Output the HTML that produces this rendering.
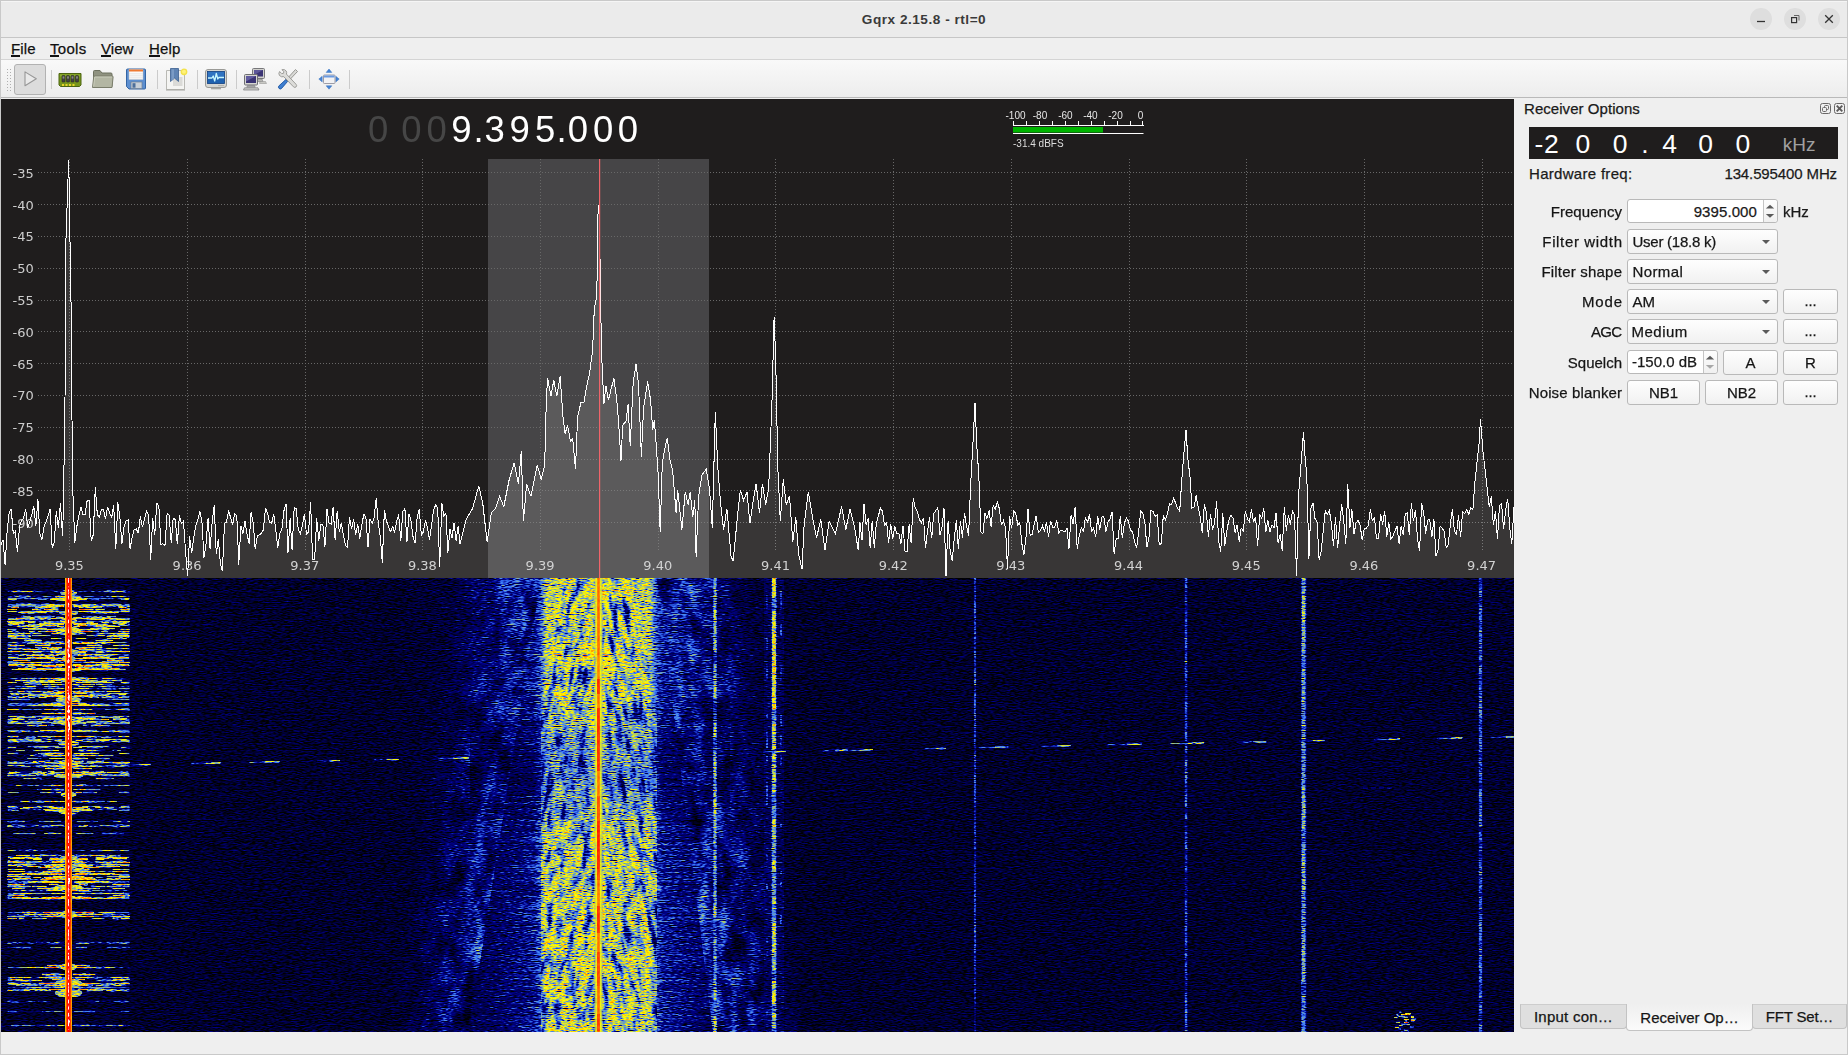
<!DOCTYPE html>
<html lang="en"><head><meta charset="utf-8"><title>Gqrx 2.15.8 - rtl=0</title>
<style>
*{box-sizing:border-box;margin:0;padding:0}
html,body{width:1848px;height:1055px;overflow:hidden;background:#efefef}
body{-webkit-text-stroke:.25px currentColor;font-family:"Liberation Sans","DejaVu Sans",sans-serif;font-size:14.6px;color:#1a1a1a;position:relative}
.abs{position:absolute}
#win{position:absolute;left:0;top:0;width:1848px;height:1055px;background:#efefef;overflow:hidden}
#titlebar{left:0;top:0;width:1848px;height:38px;background:#ebebeb;border-top:1px solid #c9c9c9;border-bottom:1px solid #c6c6c6;box-shadow:inset 0 1px 0 #f5f5f5}
#title{left:0;top:1px;width:1848px;text-align:center;font-weight:bold;font-size:13.600px;color:#3a3a3a;line-height:38px;letter-spacing:.52px;-webkit-text-stroke:0}
.wbtn{width:22px;height:22px;border-radius:11px;background:#dedede;top:8px}
#menubar{left:0;top:38px;width:1848px;height:22px;background:#efefef;border-bottom:1px solid #d4d4d4}
.menu{top:38px;height:21px;line-height:21px;font-size:15px;color:#111}
.menu i{position:absolute;left:0;top:17.300px;height:1.500px;background:#111}
#toolbar{left:0;top:60px;width:1848px;height:38px;background:linear-gradient(#f9f9f9,#f3f3f3 50%,#ededed);border-bottom:1px solid #b9b9b9}
.tsep{top:70px;width:1px;height:19px;background:#cbcbcb}
#playbtn{left:14px;top:64px;width:32px;height:31px;border:1px solid #b2b2b2;border-radius:3px;background:#dcdcdc}
.ico{top:67px;width:24px;height:24px}
#dock{left:1514px;top:99px;width:333px;height:933px;background:#efefef}
.lbl{height:24px;line-height:24px;text-align:right;white-space:nowrap;color:#151515}
.ctl{border:1px solid #b9b9b9;border-radius:3px;background:linear-gradient(#fefefe,#f1f1f1);height:25px;line-height:23px;white-space:nowrap;color:#151515}
.btn{text-align:center}
.spin{background:#fff}
.arrow{width:0;height:0;border-left:4px solid transparent;border-right:4px solid transparent;border-top:4.5px solid #5a5a5a}
.tab{top:1004px;height:25px;border:1px solid #c3c3c3;border-top:1px solid #cdcdcd;border-radius:0 0 4px 4px;background:#dfdfdf;text-align:center;line-height:24px;white-space:nowrap;color:#151515}
.tab.sel{border-top:none;height:27px;background:linear-gradient(#efefef,#fbfbfb);line-height:27px}
#edgeL{left:0;top:0;width:1px;height:1055px;background:#c9c9c9}
#edgeR{left:1847px;top:0;width:1px;height:1055px;background:#c9c9c9}
#edgeB{left:0;top:1054px;width:1848px;height:1px;background:#c9c9c9}
</style></head>
<body><div id="win">
<svg class="abs" style="left:1px;top:99px;will-change:transform" width="1513" height="479" viewBox="1 99 1513 479">
<rect x="1" y="99" width="1513" height="479" fill="#1f1d1d"/>
<rect x="488" y="159" width="221" height="419" fill="#464547"/>
<path d="M38 172.5H1514M38 204.5H1514M38 236.5H1514M38 268.5H1514M38 300.5H1514M38 331.5H1514M38 363.5H1514M38 395.5H1514M38 427.5H1514M38 459.5H1514M38 490.5H1514M38 522.5H1514M69.5 159V551M187.5 159V551M305.5 159V551M422.5 159V551M540.5 159V551M658.5 159V551M775.5 159V551M893.5 159V551M1011.5 159V551M1129.5 159V551M1246.5 159V551M1364.5 159V551M1482.5 159V551" stroke="#686868" stroke-width="1" stroke-dasharray="1 2" fill="none" shape-rendering="crispEdges"/>
<g font-family="DejaVu Sans, Liberation Sans, sans-serif" font-size="13px" fill="#cdcdcd">
<text x="33.700" y="177.7" text-anchor="end">-35</text>
<text x="33.700" y="209.5" text-anchor="end">-40</text>
<text x="33.700" y="241.3" text-anchor="end">-45</text>
<text x="33.700" y="273.1" text-anchor="end">-50</text>
<text x="33.700" y="304.9" text-anchor="end">-55</text>
<text x="33.700" y="336.7" text-anchor="end">-60</text>
<text x="33.700" y="368.5" text-anchor="end">-65</text>
<text x="33.700" y="400.3" text-anchor="end">-70</text>
<text x="33.700" y="432.1" text-anchor="end">-75</text>
<text x="33.700" y="463.9" text-anchor="end">-80</text>
<text x="33.700" y="495.7" text-anchor="end">-85</text>
<text x="33.700" y="527.5" text-anchor="end">-90</text>
<text x="69.4" y="569.700" text-anchor="middle">9.35</text>
<text x="187.1" y="569.700" text-anchor="middle">9.36</text>
<text x="304.8" y="569.700" text-anchor="middle">9.37</text>
<text x="422.4" y="569.700" text-anchor="middle">9.38</text>
<text x="540.1" y="569.700" text-anchor="middle">9.39</text>
<text x="657.8" y="569.700" text-anchor="middle">9.40</text>
<text x="775.5" y="569.700" text-anchor="middle">9.41</text>
<text x="893.2" y="569.700" text-anchor="middle">9.42</text>
<text x="1010.8" y="569.700" text-anchor="middle">9.43</text>
<text x="1128.5" y="569.700" text-anchor="middle">9.44</text>
<text x="1246.2" y="569.700" text-anchor="middle">9.45</text>
<text x="1363.9" y="569.700" text-anchor="middle">9.46</text>
<text x="1481.6" y="569.700" text-anchor="middle">9.47</text>
</g>
<polygon points="1,580 1.0,544.8 3.0,540.0 5.1,565.0 7.1,531.3 9.2,512.7 11.2,508.7 13.3,533.9 15.4,531.3 17.4,552.4 19.5,526.8 21.5,520.2 23.6,518.5 25.6,508.7 27.7,527.6 29.7,522.0 31.8,514.5 33.8,506.3 35.9,525.8 37.9,499.4 39.9,534.0 42.0,539.6 44.0,526.8 46.1,521.7 48.1,515.7 50.2,508.9 52.2,547.9 54.3,541.9 56.3,510.9 58.4,528.4 60.4,502.6 62.5,536.1 63.3,512.0 65.0,400.0 65.8,244.0 68.0,179.0 68.8,160.4 69.6,225.0 70.8,273.0 71.7,396.0 73.0,496.0 74.8,543.0 76.8,526.7 78.9,515.7 80.9,506.8 83.0,514.9 85.0,514.6 87.1,500.9 89.1,500.4 91.2,541.0 93.2,535.0 95.3,487.5 97.3,514.4 99.4,517.2 101.4,509.1 103.5,510.0 105.5,518.6 107.6,506.7 109.6,513.0 111.7,517.4 113.7,505.3 115.8,549.0 117.8,502.4 119.9,517.8 121.9,543.5 124.0,526.8 126.0,521.0 128.1,519.9 130.1,548.8 132.2,536.7 134.2,529.3 136.3,529.0 138.3,533.3 140.4,516.4 142.4,527.1 144.5,518.7 146.5,511.2 148.6,514.6 150.7,559.5 152.7,518.1 154.8,534.9 156.8,502.7 158.9,507.0 160.9,544.2 163.0,543.9 165.0,545.3 167.1,513.3 169.1,515.3 171.2,542.5 173.2,518.1 175.3,519.5 177.3,544.3 179.4,515.5 181.4,523.5 183.5,521.2 185.5,550.8 187.6,576.2 189.6,536.5 191.7,553.4 193.7,537.4 195.8,526.1 197.8,519.4 199.9,511.4 201.9,521.2 204.0,557.6 206.0,544.0 208.1,517.6 210.1,549.0 212.2,521.9 214.2,505.3 216.3,554.3 218.3,539.2 220.4,563.5 222.4,571.0 224.5,523.4 226.5,522.3 228.6,510.3 230.6,517.7 232.7,524.8 234.7,513.6 236.8,515.8 238.8,564.5 240.9,525.9 242.9,533.5 245.0,521.2 247.0,533.8 249.1,543.6 251.1,512.1 253.2,522.6 255.2,549.2 257.3,535.8 259.3,534.8 261.4,533.4 263.4,529.8 265.5,508.2 267.5,512.8 269.6,522.3 271.6,523.4 273.7,513.9 275.7,529.7 277.8,547.9 279.8,533.7 281.9,528.8 283.9,510.9 286.0,503.6 288.0,552.6 290.1,518.1 292.1,549.9 294.2,507.4 296.2,508.8 298.3,529.6 300.3,533.4 302.4,525.3 304.4,514.3 306.5,534.1 308.5,532.1 310.6,502.4 312.6,559.7 314.7,558.9 316.7,518.3 318.8,540.5 320.8,524.3 322.9,524.5 324.9,546.9 327.0,508.8 329.0,522.9 331.1,524.0 333.1,507.0 335.2,540.4 337.2,510.6 339.3,531.9 341.3,522.8 343.4,535.2 345.4,545.3 347.5,547.3 349.5,517.0 351.6,528.8 353.6,518.9 355.7,535.0 357.7,524.1 359.8,538.5 361.8,524.9 363.9,513.8 365.9,517.7 368.0,547.2 370.0,519.5 372.1,523.3 374.1,518.0 376.2,498.4 378.2,521.7 380.3,537.3 382.3,562.5 384.4,509.7 386.4,521.1 388.5,526.2 390.5,532.0 392.6,526.1 394.6,532.4 396.7,521.5 398.7,514.6 400.8,541.1 402.8,511.5 404.9,508.5 406.9,542.3 409.0,514.0 411.0,520.5 413.1,537.2 415.1,542.9 417.2,517.0 419.2,509.0 421.3,535.0 423.3,532.2 425.4,520.4 427.4,526.9 429.5,539.9 431.5,525.7 433.6,509.9 435.6,505.0 437.7,507.8 439.7,566.5 441.8,502.9 443.8,516.7 445.9,513.1 447.9,552.5 450.0,529.3 452.0,537.9 454.1,522.6 456.1,540.5 458.2,525.6 460.0,544.2 466.3,519.1 472.5,508.7 478.8,485.8 482.9,504.5 487.1,542.1 491.3,512.9 495.5,508.7 499.6,496.2 503.8,506.6 509.2,479.5 514.2,462.8 518.4,483.7 521.3,451.1 523.4,521.2 526.7,483.7 530.9,496.2 537.2,464.9 541.3,479.5 544.7,464.9 546.3,400.3 547.6,378.2 550.9,396.1 553.8,380.2 556.8,396.1 560.1,376.1 563.0,416.9 565.1,433.6 567.6,425.3 570.5,442.0 572.6,437.8 575.5,469.1 577.6,416.9 581.0,402.3 583.9,402.3 587.2,383.6 589.3,375.2 592.6,350.2 594.3,308.5 596.8,296.0 598.1,208.4 599.3,204.2 600.6,304.3 601.8,358.6 603.9,404.4 606.0,385.7 608.5,400.3 611.4,387.7 613.9,378.6 616.8,400.3 618.5,421.1 621.0,460.7 622.7,425.3 626.0,421.1 628.1,404.4 630.2,446.1 633.1,383.6 636.0,364.0 638.5,383.6 641.4,456.6 643.5,408.6 647.7,381.5 650.6,400.3 652.7,429.5 654.4,420.3 656.0,442.0 658.1,473.3 660.2,531.6 662.3,462.8 664.4,450.3 667.3,437.8 669.8,458.7 672.7,471.2 676.1,512.9 677.7,489.9 681.9,529.6 685.2,492.0 688.2,504.5 690.2,492.0 692.7,517.0 694.8,500.4 696.1,556.7 698.6,496.2 701.9,475.3 706.1,469.1 709.4,487.9 712.3,527.5 715.3,411.9 717.8,467.0 720.7,504.5 723.6,529.6 726.9,508.7 731.1,556.7 733.2,560.8 737.4,517.0 740.3,489.9 743.6,500.4 747.0,492.0 749.9,523.3 753.2,500.4 756.1,483.7 759.5,512.9 762.4,483.7 765.7,504.5 768.7,487.9 772.0,400.3 774.1,316.8 775.7,358.6 777.8,467.0 780.3,521.2 783.3,479.5 786.2,504.5 789.5,496.2 792.8,542.1 795.8,517.0 798.7,554.6 802.0,569.2 804.1,525.4 808.3,492.0 812.5,517.0 816.6,537.9 820.8,519.1 825.0,550.4 829.1,521.2 835.4,533.7 841.6,506.6 845.8,529.6 850.0,508.7 854.2,525.4 858.3,550.4 859.9,522.1 862.0,540.1 864.0,504.3 866.1,525.0 868.1,518.4 870.2,548.3 872.2,520.9 874.3,547.6 876.3,523.2 878.4,516.0 880.4,507.9 882.5,511.4 884.5,526.0 886.6,521.7 888.6,543.0 890.7,524.1 892.7,538.6 894.8,526.4 896.8,533.8 898.9,533.6 900.9,543.5 903.0,525.6 905.0,551.1 907.1,551.5 909.1,524.5 911.2,543.3 913.2,497.7 915.3,508.2 917.3,511.1 919.4,519.6 921.4,522.9 923.5,517.7 925.5,548.1 927.6,530.2 929.6,517.4 931.7,538.4 933.7,513.7 935.8,510.7 937.8,507.4 939.9,534.8 941.9,528.2 944.0,508.5 946.0,576.0 948.1,520.7 950.1,550.5 952.2,561.0 954.2,539.1 956.3,520.2 958.3,548.6 960.4,520.6 962.4,537.6 964.5,512.9 966.5,526.1 968.6,535.6 970.6,485.5 972.7,448.2 975.0,403.0 976.8,445.5 978.8,475.3 980.9,532.0 982.9,534.2 985.0,512.7 987.0,518.5 989.1,510.4 991.1,526.5 993.2,505.2 995.2,509.6 997.3,501.5 999.3,508.5 1001.4,525.2 1003.4,520.9 1005.5,527.9 1007.5,569.1 1009.6,516.5 1011.6,528.2 1013.7,511.1 1015.7,513.0 1017.8,524.9 1019.8,522.6 1021.9,544.0 1023.9,554.6 1026.0,537.0 1028.0,509.2 1030.1,535.2 1032.1,534.8 1034.2,524.1 1036.2,515.6 1038.3,532.1 1040.3,530.9 1042.4,525.7 1044.4,531.5 1046.5,521.6 1048.5,537.2 1050.6,520.7 1052.6,527.2 1054.7,527.5 1056.7,520.3 1058.8,533.1 1060.8,530.0 1062.9,530.8 1064.9,531.6 1067.0,528.3 1069.0,548.7 1071.1,515.0 1073.1,524.1 1075.2,506.8 1077.2,548.9 1079.3,535.5 1081.3,527.6 1083.4,532.2 1085.4,517.1 1087.5,522.6 1089.5,514.3 1091.6,531.7 1093.6,528.2 1095.7,537.3 1097.7,516.5 1099.8,529.5 1101.8,517.1 1103.9,516.7 1105.9,531.7 1108.0,522.4 1110.0,518.7 1112.1,512.1 1114.1,553.5 1116.2,538.8 1118.2,538.3 1120.3,515.8 1122.3,538.0 1124.4,523.2 1126.4,517.8 1128.5,521.5 1130.5,530.3 1132.6,531.9 1134.6,541.9 1136.7,548.0 1138.7,530.6 1140.8,511.1 1142.8,513.5 1144.9,522.9 1146.9,547.3 1149.0,536.9 1151.0,510.0 1153.1,511.7 1155.1,516.2 1157.2,515.0 1159.2,544.7 1161.3,543.6 1163.3,515.5 1165.4,520.0 1167.4,513.6 1169.5,503.7 1171.5,504.8 1173.6,498.1 1175.6,502.9 1177.7,508.6 1179.7,511.2 1181.8,479.6 1183.8,454.2 1186.0,430.0 1187.9,458.8 1190.0,477.0 1192.0,508.2 1194.1,506.9 1196.1,495.4 1198.2,507.5 1200.2,516.4 1202.3,532.9 1204.3,504.6 1206.4,512.1 1208.4,536.8 1210.5,513.7 1212.5,529.5 1214.6,522.7 1216.6,501.4 1218.7,541.4 1220.7,551.6 1222.8,513.4 1224.8,545.9 1226.9,530.4 1228.9,519.9 1231.0,515.0 1233.0,518.3 1235.1,532.9 1237.1,525.0 1239.2,542.0 1241.2,527.8 1243.3,531.5 1245.3,511.1 1247.4,518.6 1249.4,522.0 1251.5,509.5 1253.5,521.6 1255.6,517.1 1257.6,546.3 1259.7,514.4 1261.7,518.8 1263.8,508.4 1265.8,532.4 1267.9,520.4 1269.9,532.3 1272.0,524.8 1274.0,527.6 1276.1,512.8 1278.1,542.9 1280.2,534.4 1282.2,550.8 1284.3,507.0 1286.3,530.8 1288.4,515.2 1290.4,524.6 1292.5,510.4 1294.5,515.3 1296.6,575.5 1298.6,493.9 1300.7,468.6 1303.5,432.0 1304.8,453.5 1306.8,475.1 1308.9,558.5 1310.9,508.5 1313.0,502.7 1315.0,518.5 1317.1,522.3 1319.1,559.7 1321.2,551.2 1323.2,531.4 1325.3,510.7 1327.3,513.9 1329.4,510.5 1331.4,523.5 1333.5,546.1 1335.5,517.1 1337.6,548.1 1339.6,525.3 1341.7,504.5 1343.7,520.6 1345.8,544.2 1347.8,484.4 1349.9,527.9 1351.9,509.5 1354.0,533.9 1356.0,523.2 1358.1,520.5 1360.1,524.9 1362.2,540.0 1364.2,529.0 1366.3,528.1 1368.3,525.3 1370.4,508.9 1372.4,521.3 1374.5,517.6 1376.5,538.7 1378.6,538.3 1380.6,514.2 1382.7,524.5 1384.7,510.8 1386.8,536.6 1388.8,521.8 1390.9,538.9 1392.9,536.4 1395.0,530.7 1397.0,526.3 1399.1,543.6 1401.1,526.1 1403.2,534.9 1405.2,514.3 1407.3,512.7 1409.3,534.9 1411.4,502.9 1413.4,521.3 1415.5,509.7 1417.5,538.7 1419.6,551.1 1421.6,502.7 1423.7,512.9 1425.7,533.5 1427.8,520.0 1429.8,519.8 1431.9,537.1 1433.9,519.1 1436.0,556.2 1438.0,550.3 1440.1,526.2 1442.1,528.4 1444.2,531.3 1446.2,547.7 1448.3,544.4 1450.3,524.7 1452.4,509.3 1454.4,530.9 1456.5,534.5 1458.5,515.3 1460.6,536.9 1462.6,511.7 1464.7,513.7 1466.7,509.7 1468.8,514.2 1470.8,508.0 1472.9,509.2 1474.9,482.5 1477.0,462.3 1479.0,444.3 1480.5,419.0 1483.1,452.8 1485.2,470.5 1487.2,489.1 1489.3,507.2 1491.3,496.2 1493.4,525.4 1495.4,511.2 1497.5,539.2 1499.5,505.2 1501.6,503.9 1503.6,529.1 1505.7,509.4 1507.7,498.6 1509.8,528.5 1511.8,544.2 1513.9,506.8 1514,580" fill="#fff" fill-opacity=".115"/>
<polyline points="1.0,544.8 3.0,540.0 5.1,565.0 7.1,531.3 9.2,512.7 11.2,508.7 13.3,533.9 15.4,531.3 17.4,552.4 19.5,526.8 21.5,520.2 23.6,518.5 25.6,508.7 27.7,527.6 29.7,522.0 31.8,514.5 33.8,506.3 35.9,525.8 37.9,499.4 39.9,534.0 42.0,539.6 44.0,526.8 46.1,521.7 48.1,515.7 50.2,508.9 52.2,547.9 54.3,541.9 56.3,510.9 58.4,528.4 60.4,502.6 62.5,536.1 63.3,512.0 65.0,400.0 65.8,244.0 68.0,179.0 68.8,160.4 69.6,225.0 70.8,273.0 71.7,396.0 73.0,496.0 74.8,543.0 76.8,526.7 78.9,515.7 80.9,506.8 83.0,514.9 85.0,514.6 87.1,500.9 89.1,500.4 91.2,541.0 93.2,535.0 95.3,487.5 97.3,514.4 99.4,517.2 101.4,509.1 103.5,510.0 105.5,518.6 107.6,506.7 109.6,513.0 111.7,517.4 113.7,505.3 115.8,549.0 117.8,502.4 119.9,517.8 121.9,543.5 124.0,526.8 126.0,521.0 128.1,519.9 130.1,548.8 132.2,536.7 134.2,529.3 136.3,529.0 138.3,533.3 140.4,516.4 142.4,527.1 144.5,518.7 146.5,511.2 148.6,514.6 150.7,559.5 152.7,518.1 154.8,534.9 156.8,502.7 158.9,507.0 160.9,544.2 163.0,543.9 165.0,545.3 167.1,513.3 169.1,515.3 171.2,542.5 173.2,518.1 175.3,519.5 177.3,544.3 179.4,515.5 181.4,523.5 183.5,521.2 185.5,550.8 187.6,576.2 189.6,536.5 191.7,553.4 193.7,537.4 195.8,526.1 197.8,519.4 199.9,511.4 201.9,521.2 204.0,557.6 206.0,544.0 208.1,517.6 210.1,549.0 212.2,521.9 214.2,505.3 216.3,554.3 218.3,539.2 220.4,563.5 222.4,571.0 224.5,523.4 226.5,522.3 228.6,510.3 230.6,517.7 232.7,524.8 234.7,513.6 236.8,515.8 238.8,564.5 240.9,525.9 242.9,533.5 245.0,521.2 247.0,533.8 249.1,543.6 251.1,512.1 253.2,522.6 255.2,549.2 257.3,535.8 259.3,534.8 261.4,533.4 263.4,529.8 265.5,508.2 267.5,512.8 269.6,522.3 271.6,523.4 273.7,513.9 275.7,529.7 277.8,547.9 279.8,533.7 281.9,528.8 283.9,510.9 286.0,503.6 288.0,552.6 290.1,518.1 292.1,549.9 294.2,507.4 296.2,508.8 298.3,529.6 300.3,533.4 302.4,525.3 304.4,514.3 306.5,534.1 308.5,532.1 310.6,502.4 312.6,559.7 314.7,558.9 316.7,518.3 318.8,540.5 320.8,524.3 322.9,524.5 324.9,546.9 327.0,508.8 329.0,522.9 331.1,524.0 333.1,507.0 335.2,540.4 337.2,510.6 339.3,531.9 341.3,522.8 343.4,535.2 345.4,545.3 347.5,547.3 349.5,517.0 351.6,528.8 353.6,518.9 355.7,535.0 357.7,524.1 359.8,538.5 361.8,524.9 363.9,513.8 365.9,517.7 368.0,547.2 370.0,519.5 372.1,523.3 374.1,518.0 376.2,498.4 378.2,521.7 380.3,537.3 382.3,562.5 384.4,509.7 386.4,521.1 388.5,526.2 390.5,532.0 392.6,526.1 394.6,532.4 396.7,521.5 398.7,514.6 400.8,541.1 402.8,511.5 404.9,508.5 406.9,542.3 409.0,514.0 411.0,520.5 413.1,537.2 415.1,542.9 417.2,517.0 419.2,509.0 421.3,535.0 423.3,532.2 425.4,520.4 427.4,526.9 429.5,539.9 431.5,525.7 433.6,509.9 435.6,505.0 437.7,507.8 439.7,566.5 441.8,502.9 443.8,516.7 445.9,513.1 447.9,552.5 450.0,529.3 452.0,537.9 454.1,522.6 456.1,540.5 458.2,525.6 460.0,544.2 466.3,519.1 472.5,508.7 478.8,485.8 482.9,504.5 487.1,542.1 491.3,512.9 495.5,508.7 499.6,496.2 503.8,506.6 509.2,479.5 514.2,462.8 518.4,483.7 521.3,451.1 523.4,521.2 526.7,483.7 530.9,496.2 537.2,464.9 541.3,479.5 544.7,464.9 546.3,400.3 547.6,378.2 550.9,396.1 553.8,380.2 556.8,396.1 560.1,376.1 563.0,416.9 565.1,433.6 567.6,425.3 570.5,442.0 572.6,437.8 575.5,469.1 577.6,416.9 581.0,402.3 583.9,402.3 587.2,383.6 589.3,375.2 592.6,350.2 594.3,308.5 596.8,296.0 598.1,208.4 599.3,204.2 600.6,304.3 601.8,358.6 603.9,404.4 606.0,385.7 608.5,400.3 611.4,387.7 613.9,378.6 616.8,400.3 618.5,421.1 621.0,460.7 622.7,425.3 626.0,421.1 628.1,404.4 630.2,446.1 633.1,383.6 636.0,364.0 638.5,383.6 641.4,456.6 643.5,408.6 647.7,381.5 650.6,400.3 652.7,429.5 654.4,420.3 656.0,442.0 658.1,473.3 660.2,531.6 662.3,462.8 664.4,450.3 667.3,437.8 669.8,458.7 672.7,471.2 676.1,512.9 677.7,489.9 681.9,529.6 685.2,492.0 688.2,504.5 690.2,492.0 692.7,517.0 694.8,500.4 696.1,556.7 698.6,496.2 701.9,475.3 706.1,469.1 709.4,487.9 712.3,527.5 715.3,411.9 717.8,467.0 720.7,504.5 723.6,529.6 726.9,508.7 731.1,556.7 733.2,560.8 737.4,517.0 740.3,489.9 743.6,500.4 747.0,492.0 749.9,523.3 753.2,500.4 756.1,483.7 759.5,512.9 762.4,483.7 765.7,504.5 768.7,487.9 772.0,400.3 774.1,316.8 775.7,358.6 777.8,467.0 780.3,521.2 783.3,479.5 786.2,504.5 789.5,496.2 792.8,542.1 795.8,517.0 798.7,554.6 802.0,569.2 804.1,525.4 808.3,492.0 812.5,517.0 816.6,537.9 820.8,519.1 825.0,550.4 829.1,521.2 835.4,533.7 841.6,506.6 845.8,529.6 850.0,508.7 854.2,525.4 858.3,550.4 859.9,522.1 862.0,540.1 864.0,504.3 866.1,525.0 868.1,518.4 870.2,548.3 872.2,520.9 874.3,547.6 876.3,523.2 878.4,516.0 880.4,507.9 882.5,511.4 884.5,526.0 886.6,521.7 888.6,543.0 890.7,524.1 892.7,538.6 894.8,526.4 896.8,533.8 898.9,533.6 900.9,543.5 903.0,525.6 905.0,551.1 907.1,551.5 909.1,524.5 911.2,543.3 913.2,497.7 915.3,508.2 917.3,511.1 919.4,519.6 921.4,522.9 923.5,517.7 925.5,548.1 927.6,530.2 929.6,517.4 931.7,538.4 933.7,513.7 935.8,510.7 937.8,507.4 939.9,534.8 941.9,528.2 944.0,508.5 946.0,576.0 948.1,520.7 950.1,550.5 952.2,561.0 954.2,539.1 956.3,520.2 958.3,548.6 960.4,520.6 962.4,537.6 964.5,512.9 966.5,526.1 968.6,535.6 970.6,485.5 972.7,448.2 975.0,403.0 976.8,445.5 978.8,475.3 980.9,532.0 982.9,534.2 985.0,512.7 987.0,518.5 989.1,510.4 991.1,526.5 993.2,505.2 995.2,509.6 997.3,501.5 999.3,508.5 1001.4,525.2 1003.4,520.9 1005.5,527.9 1007.5,569.1 1009.6,516.5 1011.6,528.2 1013.7,511.1 1015.7,513.0 1017.8,524.9 1019.8,522.6 1021.9,544.0 1023.9,554.6 1026.0,537.0 1028.0,509.2 1030.1,535.2 1032.1,534.8 1034.2,524.1 1036.2,515.6 1038.3,532.1 1040.3,530.9 1042.4,525.7 1044.4,531.5 1046.5,521.6 1048.5,537.2 1050.6,520.7 1052.6,527.2 1054.7,527.5 1056.7,520.3 1058.8,533.1 1060.8,530.0 1062.9,530.8 1064.9,531.6 1067.0,528.3 1069.0,548.7 1071.1,515.0 1073.1,524.1 1075.2,506.8 1077.2,548.9 1079.3,535.5 1081.3,527.6 1083.4,532.2 1085.4,517.1 1087.5,522.6 1089.5,514.3 1091.6,531.7 1093.6,528.2 1095.7,537.3 1097.7,516.5 1099.8,529.5 1101.8,517.1 1103.9,516.7 1105.9,531.7 1108.0,522.4 1110.0,518.7 1112.1,512.1 1114.1,553.5 1116.2,538.8 1118.2,538.3 1120.3,515.8 1122.3,538.0 1124.4,523.2 1126.4,517.8 1128.5,521.5 1130.5,530.3 1132.6,531.9 1134.6,541.9 1136.7,548.0 1138.7,530.6 1140.8,511.1 1142.8,513.5 1144.9,522.9 1146.9,547.3 1149.0,536.9 1151.0,510.0 1153.1,511.7 1155.1,516.2 1157.2,515.0 1159.2,544.7 1161.3,543.6 1163.3,515.5 1165.4,520.0 1167.4,513.6 1169.5,503.7 1171.5,504.8 1173.6,498.1 1175.6,502.9 1177.7,508.6 1179.7,511.2 1181.8,479.6 1183.8,454.2 1186.0,430.0 1187.9,458.8 1190.0,477.0 1192.0,508.2 1194.1,506.9 1196.1,495.4 1198.2,507.5 1200.2,516.4 1202.3,532.9 1204.3,504.6 1206.4,512.1 1208.4,536.8 1210.5,513.7 1212.5,529.5 1214.6,522.7 1216.6,501.4 1218.7,541.4 1220.7,551.6 1222.8,513.4 1224.8,545.9 1226.9,530.4 1228.9,519.9 1231.0,515.0 1233.0,518.3 1235.1,532.9 1237.1,525.0 1239.2,542.0 1241.2,527.8 1243.3,531.5 1245.3,511.1 1247.4,518.6 1249.4,522.0 1251.5,509.5 1253.5,521.6 1255.6,517.1 1257.6,546.3 1259.7,514.4 1261.7,518.8 1263.8,508.4 1265.8,532.4 1267.9,520.4 1269.9,532.3 1272.0,524.8 1274.0,527.6 1276.1,512.8 1278.1,542.9 1280.2,534.4 1282.2,550.8 1284.3,507.0 1286.3,530.8 1288.4,515.2 1290.4,524.6 1292.5,510.4 1294.5,515.3 1296.6,575.5 1298.6,493.9 1300.7,468.6 1303.5,432.0 1304.8,453.5 1306.8,475.1 1308.9,558.5 1310.9,508.5 1313.0,502.7 1315.0,518.5 1317.1,522.3 1319.1,559.7 1321.2,551.2 1323.2,531.4 1325.3,510.7 1327.3,513.9 1329.4,510.5 1331.4,523.5 1333.5,546.1 1335.5,517.1 1337.6,548.1 1339.6,525.3 1341.7,504.5 1343.7,520.6 1345.8,544.2 1347.8,484.4 1349.9,527.9 1351.9,509.5 1354.0,533.9 1356.0,523.2 1358.1,520.5 1360.1,524.9 1362.2,540.0 1364.2,529.0 1366.3,528.1 1368.3,525.3 1370.4,508.9 1372.4,521.3 1374.5,517.6 1376.5,538.7 1378.6,538.3 1380.6,514.2 1382.7,524.5 1384.7,510.8 1386.8,536.6 1388.8,521.8 1390.9,538.9 1392.9,536.4 1395.0,530.7 1397.0,526.3 1399.1,543.6 1401.1,526.1 1403.2,534.9 1405.2,514.3 1407.3,512.7 1409.3,534.9 1411.4,502.9 1413.4,521.3 1415.5,509.7 1417.5,538.7 1419.6,551.1 1421.6,502.7 1423.7,512.9 1425.7,533.5 1427.8,520.0 1429.8,519.8 1431.9,537.1 1433.9,519.1 1436.0,556.2 1438.0,550.3 1440.1,526.2 1442.1,528.4 1444.2,531.3 1446.2,547.7 1448.3,544.4 1450.3,524.7 1452.4,509.3 1454.4,530.9 1456.5,534.5 1458.5,515.3 1460.6,536.9 1462.6,511.7 1464.7,513.7 1466.7,509.7 1468.8,514.2 1470.8,508.0 1472.9,509.2 1474.9,482.5 1477.0,462.3 1479.0,444.3 1480.5,419.0 1483.1,452.8 1485.2,470.5 1487.2,489.1 1489.3,507.2 1491.3,496.2 1493.4,525.4 1495.4,511.2 1497.5,539.2 1499.5,505.2 1501.6,503.9 1503.6,529.1 1505.7,509.4 1507.7,498.6 1509.8,528.5 1511.8,544.2 1513.9,506.8" fill="none" stroke="#fff" stroke-width="1" stroke-linejoin="miter" stroke-miterlimit="3" shape-rendering="crispEdges"/>
<rect x="599" y="159" width="1.200" height="419" fill="#f0646a"/>
<g font-family="Liberation Sans, sans-serif" font-size="36.500px">
<text y="142.100"><tspan x="368.0 401.3 426.5" fill="#464646">000</tspan><tspan x="451.2 473.4 484.6 509.6 534.9 556.5 567.7 592.9 617.7" fill="#fff">9.395.000</tspan></text>
</g>
<g font-family="Liberation Sans, sans-serif" font-size="10px" fill="#e6e6e6">
<text x="1015.5" y="119" text-anchor="middle">-100</text>
<text x="1040" y="119" text-anchor="middle">-80</text>
<text x="1065.4" y="119" text-anchor="middle">-60</text>
<text x="1090.4" y="119" text-anchor="middle">-40</text>
<text x="1115.5" y="119" text-anchor="middle">-20</text>
<text x="1143.300" y="119" text-anchor="end">0</text>
<text x="1013" y="147" font-size="10px" fill="#dcdcdc">-31.4 dBFS</text>
</g>
<path d="M1013 125.500H1143.500M1013.5 121V126M1026.5 121V126M1039.5 121V126M1052.5 121V126M1065.5 121V126M1078.5 121V126M1091.5 121V126M1104.5 121V126M1117.5 121V126M1130.5 121V126M1142.5 121V126" stroke="#fff" stroke-width="1" fill="none" shape-rendering="crispEdges"/>
<rect x="1013" y="127" width="90" height="5.500" fill="#00b400"/>
<rect x="1013" y="133" width="130.500" height="1" fill="#fff"/>
</svg>
<svg class="abs" style="left:1px;top:578px" width="1513" height="454" viewBox="1 578 1513 454">
<defs>
<filter id="cm" x="0" y="0" width="100%" height="100%" color-interpolation-filters="sRGB">
<feTurbulence type="fractalNoise" baseFrequency="0.61 0.83" numOctaves="2" seed="5" result="t"/>
<feGaussianBlur in="t" stdDeviation="0.8 0" result="tb"/>
<feColorMatrix in="tb" type="matrix" values="1.7 0 0 0 -0.350 1.7 0 0 0 -0.350 1.7 0 0 0 -0.350 0 0 0 0 1" result="n"/>
<feComponentTransfer in="n" result="nc"><feFuncR type="table" tableValues="0 0.25 0.5 0.69 0.8"/><feFuncG type="table" tableValues="0 0.25 0.5 0.69 0.8"/><feFuncB type="table" tableValues="0 0.25 0.5 0.69 0.8"/></feComponentTransfer>
<feComposite in="SourceGraphic" in2="nc" operator="arithmetic" k1="1.1" k2="0.450" k3="0.42" k4="-0.210" result="lv"/>
<feComponentTransfer in="lv"><feFuncR type="table" tableValues="0 0 0 0 0 0 0 0 0 0 0 0 0 0 0 0.039 0.078 0.118 0.157 0.196 0.235 0.312 0.388 0.465 0.541 0.618 0.694 0.771 0.847 0.924 1 1 1 1 1 1 1 1 1 1 1 1 1 1 1 1 1 1 1 1 1 1"/><feFuncG type="table" tableValues="0 0 0 0 0 0 0 0 0 0 0 0 0 0 0 0.082 0.163 0.245 0.327 0.408 0.49 0.541 0.592 0.643 0.694 0.745 0.796 0.847 0.898 0.949 1 0.95 0.9 0.85 0.8 0.75 0.7 0.65 0.6 0.55 0.5 0.45 0.4 0.35 0.3 0.25 0.2 0.15 0.1 0.05 0 1"/><feFuncB type="table" tableValues="0 0 0 0 0 0.055 0.11 0.165 0.22 0.275 0.329 0.384 0.439 0.494 0.549 0.624 0.699 0.775 0.85 0.925 1 0.9 0.8 0.7 0.6 0.5 0.4 0.3 0.2 0.1 0 0 0 0 0 0 0 0 0 0 0 0 0 0 0 0 0 0 0 0 0 1"/></feComponentTransfer>
</filter>
<filter id="cm2" x="0" y="0" width="100%" height="100%" color-interpolation-filters="sRGB">
<feTurbulence type="fractalNoise" baseFrequency="0.45 0.3" numOctaves="1" seed="9" result="t"/>
<feColorMatrix in="t" type="matrix" values="1 0 0 0 0 1 0 0 0 0 1 0 0 0 0 0 0 0 0 1" result="n0"/>
<feComposite in="n0" in2="SourceAlpha" operator="in" result="n"/>
<feComposite in="SourceGraphic" in2="n" operator="arithmetic" k1="0" k2="1" k3="0.14" k4="-0.070" result="lv"/>
<feComponentTransfer in="lv"><feFuncR type="table" tableValues="0 0 0 0 0 0 0 0 0 0 0 0 0 0 0 0.039 0.078 0.118 0.157 0.196 0.235 0.312 0.388 0.465 0.541 0.618 0.694 0.771 0.847 0.924 1 1 1 1 1 1 1 1 1 1 1 1 1 1 1 1 1 1 1 1 1 1"/><feFuncG type="table" tableValues="0 0 0 0 0 0 0 0 0 0 0 0 0 0 0 0.082 0.163 0.245 0.327 0.408 0.49 0.541 0.592 0.643 0.694 0.745 0.796 0.847 0.898 0.949 1 0.95 0.9 0.85 0.8 0.75 0.7 0.65 0.6 0.55 0.5 0.45 0.4 0.35 0.3 0.25 0.2 0.15 0.1 0.05 0 1"/><feFuncB type="table" tableValues="0 0 0 0 0 0.055 0.11 0.165 0.22 0.275 0.329 0.384 0.439 0.494 0.549 0.624 0.699 0.775 0.85 0.925 1 0.9 0.8 0.7 0.6 0.5 0.4 0.3 0.2 0.1 0 0 0 0 0 0 0 0 0 0 0 0 0 0 0 0 0 0 0 0 0 1"/></feComponentTransfer>
</filter>
<filter id="mn" x="0" y="0" width="100%" height="100%" color-interpolation-filters="sRGB">
<feTurbulence type="fractalNoise" baseFrequency="0.15 0.045" numOctaves="2" seed="8" result="t"/>
<feColorMatrix in="t" type="matrix" values="1.9 0 0 0 -0.436 1.9 0 0 0 -0.436 1.9 0 0 0 -0.436 0 0 0 0 1" result="n0"/>
<feComponentTransfer in="n0" result="n"><feFuncR type="table" tableValues="0 0.25 0.5 0.6 0.66"/><feFuncG type="table" tableValues="0 0.25 0.5 0.6 0.66"/><feFuncB type="table" tableValues="0 0.25 0.5 0.6 0.66"/></feComponentTransfer>
<feComposite in="n" in2="SourceGraphic" operator="in"/>
</filter>
<filter id="mn2" x="0" y="0" width="100%" height="100%" color-interpolation-filters="sRGB">
<feTurbulence type="fractalNoise" baseFrequency="0.16 0.04" numOctaves="2" seed="21" result="t"/>
<feColorMatrix in="t" type="matrix" values="1.9 0 0 0 -0.436 1.9 0 0 0 -0.436 1.9 0 0 0 -0.436 0 0 0 0 1" result="n0"/>
<feComponentTransfer in="n0" result="n"><feFuncR type="table" tableValues="0 0.25 0.5 0.6 0.66"/><feFuncG type="table" tableValues="0 0.25 0.5 0.6 0.66"/><feFuncB type="table" tableValues="0 0.25 0.5 0.6 0.66"/></feComponentTransfer>
<feComposite in="n" in2="SourceGraphic" operator="in"/>
</filter>
<filter id="hn" x="0" y="0" width="100%" height="100%" color-interpolation-filters="sRGB">
<feTurbulence type="fractalNoise" baseFrequency="0.012 0.35" numOctaves="2" seed="4" result="t"/>
<feColorMatrix in="t" type="matrix" values="0.9 0 0 0 -0.13 0.9 0 0 0 -0.13 0.9 0 0 0 -0.13 0 0 0 0 1" result="n"/>
<feComposite in="n" in2="SourceGraphic" operator="in"/>
</filter>
<linearGradient id="bg" gradientUnits="userSpaceOnUse" x1="1" y1="0" x2="1514" y2="0"><stop offset="0.00000" stop-color="#242424"/><stop offset="0.26371" stop-color="#242424"/><stop offset="0.29676" stop-color="#282828"/><stop offset="0.32320" stop-color="#323232"/><stop offset="0.34303" stop-color="#3a3a3a"/><stop offset="0.35228" stop-color="#404040"/><stop offset="0.35558" stop-color="#545454"/><stop offset="0.35823" stop-color="#686868"/><stop offset="0.36087" stop-color="#878787"/><stop offset="0.36418" stop-color="#858585"/><stop offset="0.37277" stop-color="#878787"/><stop offset="0.38665" stop-color="#838383"/><stop offset="0.39061" stop-color="#8f8f8f"/><stop offset="0.39326" stop-color="#a1a1a1"/><stop offset="0.39689" stop-color="#a1a1a1"/><stop offset="0.39987" stop-color="#8f8f8f"/><stop offset="0.40582" stop-color="#838383"/><stop offset="0.42234" stop-color="#838383"/><stop offset="0.42631" stop-color="#888888"/><stop offset="0.42895" stop-color="#818181"/><stop offset="0.43159" stop-color="#666666"/><stop offset="0.43424" stop-color="#545454"/><stop offset="0.43754" stop-color="#444444"/><stop offset="0.44878" stop-color="#3c3c3c"/><stop offset="0.46530" stop-color="#323232"/><stop offset="0.48513" stop-color="#2a2a2a"/><stop offset="0.52809" stop-color="#242424"/><stop offset="1.00000" stop-color="#242424"/></linearGradient>
<linearGradient id="ml" gradientUnits="userSpaceOnUse" x1="541" y1="0" x2="657" y2="0"><stop offset="0" stop-color="#fff" stop-opacity="0"/><stop offset=".04" stop-color="#fff" stop-opacity="0.55"/><stop offset=".45" stop-color="#fff" stop-opacity="0.55"/><stop offset=".5" stop-color="#fff" stop-opacity="0.22"/><stop offset=".55" stop-color="#fff" stop-opacity="0.55"/><stop offset=".95" stop-color="#fff" stop-opacity="0.55"/><stop offset="1" stop-color="#fff" stop-opacity="0"/></linearGradient>
<linearGradient id="vdim" gradientUnits="userSpaceOnUse" x1="0" y1="578" x2="0" y2="1032"><stop offset="0.0000" stop-color="#000" stop-opacity="0"/><stop offset="0.2467" stop-color="#000" stop-opacity="0"/><stop offset="0.3458" stop-color="#000" stop-opacity="0.16"/><stop offset="0.4229" stop-color="#000" stop-opacity="0.24"/><stop offset="0.4890" stop-color="#000" stop-opacity="0.16"/><stop offset="0.5551" stop-color="#000" stop-opacity="0.04"/><stop offset="0.7093" stop-color="#000" stop-opacity="0"/><stop offset="1.0000" stop-color="#000" stop-opacity="0"/></linearGradient>
<linearGradient id="hl" gradientUnits="userSpaceOnUse" x1="458" y1="0" x2="541" y2="0"><stop offset="0" stop-color="#fff" stop-opacity="0"/><stop offset=".5" stop-color="#fff" stop-opacity=".3"/><stop offset="1" stop-color="#fff" stop-opacity=".62"/></linearGradient>
<linearGradient id="hr" gradientUnits="userSpaceOnUse" x1="657" y1="0" x2="750" y2="0"><stop offset="0" stop-color="#fff" stop-opacity=".65"/><stop offset=".5" stop-color="#fff" stop-opacity=".4"/><stop offset="1" stop-color="#fff" stop-opacity="0"/></linearGradient>
<clipPath id="bandL"><rect x="541" y="578" width="57.500" height="454"/></clipPath>
<clipPath id="bandR"><rect x="598.500" y="578" width="58.500" height="454"/></clipPath>
<clipPath id="hlclip"><rect x="380" y="578" width="161" height="454"/></clipPath>
<clipPath id="hrclip"><rect x="657" y="578" width="160" height="454"/></clipPath>
<filter id="mn3" x="0" y="0" width="100%" height="100%" color-interpolation-filters="sRGB">
<feTurbulence type="fractalNoise" baseFrequency="0.07 0.03" numOctaves="2" seed="12" result="t"/>
<feColorMatrix in="t" type="matrix" values="0.9 0 0 0 -0.14 0.9 0 0 0 -0.14 0.9 0 0 0 -0.14 0 0 0 0 1" result="n"/>
<feComposite in="n" in2="SourceGraphic" operator="in"/>
</filter>
</defs>
<g filter="url(#cm)">
<rect x="1" y="578" width="1513" height="454" fill="url(#bg)"/>
<g clip-path="url(#hlclip)"><g transform="translate(541 578) skewX(-9) translate(-541 -578)"><rect x="440" y="578" width="101" height="454" fill="url(#hl)" filter="url(#mn3)"/></g></g>
<g clip-path="url(#hrclip)"><g transform="translate(657 578) skewX(7) translate(-657 -578)"><rect x="657" y="578" width="93" height="454" fill="url(#hr)" filter="url(#mn3)"/></g></g>
<rect x="440" y="578" width="101" height="454" fill="url(#hl)" filter="url(#hn)" opacity=".45"/>
<rect x="657" y="578" width="93" height="454" fill="url(#hr)" filter="url(#hn)" opacity=".45"/>
<g clip-path="url(#bandL)"><g transform="translate(598 700) skewX(-9) translate(-598 -700)"><rect x="400" y="578" width="400" height="454" fill="url(#ml)" filter="url(#mn)"/></g></g>
<g clip-path="url(#bandR)"><g transform="translate(598 700) skewX(9) translate(-598 -700)"><rect x="400" y="578" width="400" height="454" fill="url(#ml)" filter="url(#mn2)"/></g></g>
<rect x="470" y="578" width="260" height="454" fill="url(#vdim)"/>
<path d="M7.6 942.5h122.0" stroke="#242424" stroke-width="1" fill="none"/>
<path d="M7.6 821.5h122.0" stroke="#303030" stroke-width="1" fill="none"/>
<path d="M7.6 825.5h122.0M7.6 1011.5h122.0" stroke="#363636" stroke-width="1" fill="none"/>
<path d="M7.6 826.5h122.0" stroke="#3c3c3c" stroke-width="1" fill="none"/>
<path d="M7.6 763.5h122.0M7.6 850.5h122.0M101.6 943.5h9.5M7.6 1025.5h122.0" stroke="#424242" stroke-width="1" fill="none"/>
<path d="M7.6 686.5h122.0M7.6 688.5h122.0M7.6 716.5h122.0M7.6 722.5h122.0M7.6 765.5h122.0M7.6 766.5h122.0M26.1 943.5h9.5" stroke="#484848" stroke-width="1" fill="none"/>
<path d="M26.7 825.5h8.9M9.6 1001.5h15.0M112.6 1001.5h15.0" stroke="#484848" stroke-width="1.5" fill="none"/>
<path d="M7.6 591.5h122.0M7.6 596.5h122.0M7.6 598.5h122.0M7.6 654.5h122.0M7.6 693.5h122.0M7.6 703.5h122.0M7.6 731.5h122.0M7.6 809.5h122.0M18.5 942.5h12.1M120.6 947.5h9.0M7.6 987.5h122.0M25.6 1001.5h10.0M101.6 1001.5h10.0M37.8 1001.5h12.8" stroke="#4e4e4e" stroke-width="1" fill="none"/>
<path d="M120.6 943.5h9.0" stroke="#4e4e4e" stroke-width="1.5" fill="none"/>
<path d="M7.6 605.5h122.0M7.6 704.5h122.0M14.6 730.5h16.0M106.6 730.5h16.0M7.6 736.5h122.0M29.3 737.5h6.3M7.6 739.5h122.0M7.6 741.5h122.0M28.8 773.5h12.8M7.6 774.5h122.0M101.6 825.5h8.9M7.6 882.5h122.0M7.6 942.5h9.0M7.6 943.5h9.0M7.6 947.5h17.0M7.6 947.5h9.0M7.6 984.5h122.0" stroke="#545454" stroke-width="1" fill="none"/>
<path d="M39.0 821.5h7.6M7.6 821.5h11.0M12.2 825.5h12.4M112.6 825.5h12.4M35.8 942.5h14.8M86.6 942.5h14.8M120.6 942.5h9.0M106.6 947.5h14.6M15.6 947.5h15.0M106.6 947.5h15.0M112.6 947.5h17.0M86.6 1001.5h12.8M37.1 1025.5h13.5" stroke="#545454" stroke-width="1.5" fill="none"/>
<path d="M7.6 604.5h122.0M7.6 606.5h122.0M7.6 611.5h122.0M7.6 618.5h122.0M7.6 621.5h122.0M7.6 625.5h122.0M7.6 642.5h122.0M7.6 651.5h122.0M7.6 655.5h122.0M7.6 658.5h122.0M7.6 662.5h122.0M7.6 665.5h122.0M7.6 678.5h122.0M7.6 691.5h122.0M7.6 696.5h122.0M7.6 705.5h122.0M7.6 709.5h122.0M35.4 750.5h19.2M82.6 750.5h19.2M7.6 762.5h122.0M7.6 785.5h122.0M90.6 821.5h7.6M82.6 821.5h10.2M19.0 850.5h16.6M34.5 850.5h12.1M7.6 861.5h122.0M7.6 862.5h122.0M7.6 864.5h122.0M7.6 871.5h122.0M7.6 874.5h122.0M7.6 879.5h122.0M7.6 881.5h122.0M7.6 890.5h122.0M7.6 893.5h122.0M7.6 897.5h122.0M7.6 898.5h122.0M7.6 912.5h122.0M7.6 914.5h122.0M7.6 916.5h122.0M73.6 942.5h6.7M7.6 943.5h11.0M7.6 967.5h122.0M7.6 977.5h122.0M7.6 983.5h122.0M7.6 989.5h122.0M41.9 1011.5h12.7M86.6 1025.5h13.5" stroke="#5a5a5a" stroke-width="1" fill="none"/>
<path d="M101.6 737.5h6.3M86.6 747.5h16.1M16.9 775.5h18.7M118.6 821.5h11.0M11.4 825.5h19.2M106.6 825.5h19.2M112.6 833.5h11.5M106.6 942.5h12.1M73.6 942.5h16.1M118.6 943.5h11.0M118.6 1001.5h11.0M82.6 1011.5h12.7" stroke="#5a5a5a" stroke-width="1.5" fill="none"/>
<path d="M106.6 699.5h19.5M95.6 722.5h18.8M101.6 722.5h7.2M90.6 750.5h14.0M40.5 775.5h6.1M44.4 821.5h10.2M13.1 833.5h11.5M82.6 833.5h6.3M101.6 850.5h16.6M47.5 942.5h16.1M16.0 947.5h14.6M120.6 1011.5h9.0" stroke="#606060" stroke-width="1" fill="none"/>
<path d="M41.1 717.5h13.5M40.0 721.5h10.6M22.8 722.5h18.8M95.6 773.5h12.8M101.6 775.5h18.7M90.6 775.5h6.1M120.6 821.5h9.0M7.6 825.5h11.0M18.6 833.5h17.0M101.6 833.5h17.0M48.3 833.5h6.3M90.6 850.5h12.1M56.9 942.5h6.7M7.6 1001.5h11.0M7.6 1011.5h9.0" stroke="#606060" stroke-width="1.5" fill="none"/>
<path d="M95.6 598.5h17.2M101.6 605.5h11.1M14.7 635.5h15.9M7.6 703.5h17.0M106.6 717.5h12.5M18.0 750.5h6.6M27.1 758.5h14.5M82.6 763.5h11.4M86.6 766.5h15.4M36.7 789.5h13.9M86.6 801.5h18.8M95.6 825.5h13.1M75.6 943.5h13.8" stroke="#666666" stroke-width="1" fill="none"/>
<path d="M90.6 599.5h8.6M95.6 654.5h6.6M24.7 684.5h16.9M101.6 686.5h13.2M11.1 699.5h19.5M18.1 717.5h12.5M82.6 717.5h13.5M101.6 737.5h9.8M40.3 737.5h10.3M101.6 737.5h8.7M34.5 747.5h16.1M32.6 750.5h14.0M43.2 763.5h11.4M20.5 766.5h10.1M106.6 766.5h10.1M35.2 766.5h15.4M86.6 789.5h13.9M106.6 808.5h10.7M7.6 821.5h9.0M7.6 821.5h17.0M28.5 825.5h13.1M118.6 825.5h11.0M47.8 943.5h13.8" stroke="#666666" stroke-width="1.5" fill="none"/>
<path d="M38.0 599.5h8.6M24.5 605.5h11.1M32.0 606.5h9.6M86.6 616.5h16.1M86.6 617.5h18.6M106.6 635.5h15.9M90.6 682.5h9.9M95.6 684.5h16.9M17.6 699.5h7.0M112.6 699.5h7.0M38.6 718.5h16.0M28.4 722.5h7.2M7.6 730.5h11.0M26.9 737.5h8.7M112.6 750.5h6.6M112.6 750.5h8.6M23.6 755.5h18.0M95.6 758.5h14.5M118.6 810.5h11.0M112.6 821.5h17.0M118.6 826.5h11.0M16.2 984.5h19.4M95.6 985.5h6.7M16.0 985.5h19.6M34.9 987.5h6.7" stroke="#6c6c6c" stroke-width="1" fill="none"/>
<path d="M28.7 591.5h6.9M101.6 591.5h6.9M24.4 598.5h17.2M95.6 606.5h9.6M34.5 616.5h16.1M21.1 616.5h9.5M106.6 616.5h9.5M112.6 619.5h10.2M22.6 649.5h8.0M35.0 654.5h6.6M22.4 686.5h13.2M118.6 703.5h9.8M38.1 704.5h8.5M35.0 716.5h19.6M82.6 716.5h19.6M82.6 718.5h16.0M86.6 721.5h10.6M24.8 721.5h16.8M118.6 730.5h11.0M25.8 737.5h9.8M86.6 737.5h10.3M82.6 739.5h10.2M27.5 746.5h19.1M95.6 755.5h18.0M7.6 763.5h9.0M120.6 763.5h9.0M15.1 763.5h9.5M118.6 765.5h11.0M120.6 773.5h9.0M40.0 792.5h14.6M31.8 801.5h18.8M101.6 984.5h19.4M101.6 985.5h19.6M86.6 987.5h9.6M95.6 987.5h6.7M21.7 1025.5h8.9M106.6 1025.5h8.9M118.6 1025.5h7.3" stroke="#6c6c6c" stroke-width="1.5" fill="none"/>
<path d="M32.0 617.5h18.6M106.6 619.5h14.4M95.6 619.5h15.0M38.4 629.5h16.2M31.7 635.5h18.9M32.7 652.5h8.9M39.4 680.5h15.2M95.6 682.5h18.6M7.6 688.5h11.0M8.8 703.5h9.8M112.6 703.5h17.0M82.6 704.5h6.7M45.3 704.5h9.3M82.6 704.5h9.3M112.6 716.5h8.3M7.6 723.5h11.0M38.1 736.5h8.5M90.6 736.5h8.5M44.4 739.5h10.2M16.0 750.5h8.6M44.2 755.5h10.4M82.6 755.5h10.4M90.6 755.5h11.8M27.8 758.5h7.8M7.6 765.5h11.0M86.6 766.5h14.7M28.9 778.5h12.7M38.2 806.5h16.4M86.6 806.5h13.1M26.1 807.5h15.5M95.6 807.5h15.5M7.6 810.5h11.0M51.5 821.5h10.1M75.6 821.5h10.1M78.6 826.5h16.9M101.6 850.5h9.8M50.4 947.5h11.2M34.9 985.5h6.7M73.6 1011.5h9.6" stroke="#727272" stroke-width="1" fill="none"/>
<path d="M13.9 596.5h16.7M106.6 604.5h14.6M118.6 619.5h11.0M14.4 619.5h10.2M101.6 621.5h14.6M90.6 629.5h18.8M95.6 633.5h16.1M16.9 638.5h13.7M34.9 643.5h15.7M86.6 643.5h15.7M95.6 647.5h6.8M106.6 649.5h8.0M19.9 654.5h15.7M101.6 654.5h15.7M82.6 680.5h15.2M23.0 682.5h18.6M118.6 688.5h11.0M20.6 688.5h15.0M101.6 688.5h15.0M42.5 692.5h8.1M101.6 697.5h16.5M90.6 704.5h8.5M118.6 716.5h10.4M95.6 721.5h16.8M48.1 725.5h6.5M28.2 725.5h18.4M112.6 741.5h8.6M7.6 741.5h11.0M118.6 741.5h11.0M90.6 746.5h19.1M38.5 747.5h8.1M90.6 747.5h8.1M120.6 747.5h9.0M34.8 755.5h11.8M101.6 758.5h7.8M95.6 761.5h8.1M112.6 763.5h9.5M47.8 771.5h6.8M14.8 772.5h15.8M31.2 772.5h15.4M90.6 772.5h15.4M7.6 773.5h9.0M90.6 774.5h9.8M82.6 774.5h8.2M7.6 775.5h9.0M120.6 775.5h9.0M82.6 792.5h14.6M20.3 801.5h10.3M19.9 808.5h10.7M7.6 826.5h11.0M112.6 826.5h6.5M25.8 850.5h9.8M20.9 890.5h14.7M101.6 890.5h14.7M34.6 893.5h12.0M75.6 947.5h11.2M41.0 987.5h9.6M11.3 1025.5h7.3" stroke="#727272" stroke-width="1.5" fill="none"/>
<path d="M106.6 596.5h16.7M106.6 596.5h14.8M101.6 612.5h7.6M82.6 616.5h7.8M33.0 617.5h13.6M35.6 618.5h19.0M16.2 619.5h14.4M33.9 619.5h16.7M13.3 621.5h11.3M28.9 624.5h12.7M27.8 628.5h18.8M82.6 629.5h16.2M27.8 629.5h18.8M86.6 635.5h18.9M106.6 642.5h18.3M34.8 647.5h6.8M82.6 681.5h14.2M36.7 682.5h9.9M90.6 697.5h8.2M19.1 697.5h16.5M7.6 699.5h9.0M120.6 699.5h9.0M101.6 717.5h15.1M27.6 723.5h14.0M95.6 723.5h14.0M106.6 723.5h18.2M82.6 731.5h14.8M101.6 739.5h12.0M33.5 761.5h8.1M11.2 765.5h13.4M106.6 775.5h9.8M7.6 792.5h11.0M106.6 801.5h10.3M82.6 806.5h16.4M73.6 825.5h14.5M7.6 826.5h9.0M43.7 833.5h17.9M75.6 833.5h17.9M101.6 850.5h8.6M7.6 850.5h9.0M120.6 850.5h9.0M24.5 864.5h11.1M86.6 974.5h8.3M106.6 980.5h16.2M40.5 990.5h10.1M54.0 1011.5h9.6" stroke="#787878" stroke-width="1" fill="none"/>
<path d="M12.8 591.5h17.8M106.6 591.5h17.8M15.8 596.5h14.8M16.1 604.5h19.5M101.6 604.5h19.5M15.7 605.5h14.9M46.8 616.5h7.8M26.6 617.5h9.0M7.6 619.5h11.0M86.6 619.5h16.7M95.6 619.5h7.4M21.0 621.5h14.6M12.3 642.5h18.3M25.9 642.5h15.7M37.9 649.5h16.7M82.6 649.5h16.7M95.6 652.5h8.9M20.2 680.5h15.4M86.6 692.5h8.1M11.5 693.5h19.1M90.6 694.5h10.5M11.5 697.5h13.1M47.9 704.5h6.7M8.2 716.5h10.4M20.5 717.5h15.1M118.6 721.5h11.0M82.6 725.5h6.5M90.6 725.5h18.4M78.6 730.5h18.1M23.6 739.5h12.0M7.6 747.5h9.0M90.6 753.5h8.7M112.6 765.5h13.4M39.5 765.5h7.1M90.6 765.5h7.1M35.9 766.5h14.7M82.6 771.5h6.8M95.6 771.5h8.5M106.6 772.5h15.8M40.2 773.5h14.4M82.6 773.5h14.4M36.8 774.5h9.8M46.4 774.5h8.2M7.6 775.5h11.0M118.6 775.5h11.0M101.6 775.5h13.2M20.8 775.5h9.8M118.6 792.5h11.0M47.3 806.5h7.3M49.1 825.5h14.5M120.6 826.5h9.0M18.1 826.5h6.5M41.7 826.5h16.9M27.0 850.5h8.6M106.6 855.5h14.4M18.5 879.5h12.1M101.6 882.5h12.9M90.6 886.5h14.8M90.6 914.5h12.3M14.4 980.5h16.2M95.6 987.5h14.9M95.6 989.5h6.4M86.6 990.5h10.1M22.7 990.5h7.9M14.3 990.5h16.3M106.6 990.5h16.3M118.6 990.5h11.0" stroke="#787878" stroke-width="1.5" fill="none"/>
<path d="M120.6 599.5h9.0M40.2 606.5h14.4M82.6 606.5h14.4M45.3 607.5h9.3M82.6 607.5h9.3M101.6 617.5h9.0M82.6 618.5h19.0M26.6 619.5h15.0M29.3 624.5h17.3M101.6 624.5h7.2M106.6 638.5h13.7M26.8 643.5h8.8M106.6 648.5h16.9M101.6 680.5h15.4M40.4 681.5h14.2M101.6 686.5h8.2M90.6 694.5h19.0M38.4 697.5h8.2M120.6 697.5h9.0M10.3 703.5h6.3M120.6 703.5h6.3M32.0 716.5h9.6M95.6 716.5h9.6M112.6 717.5h7.4M7.6 722.5h9.0M40.5 730.5h18.1M56.7 730.5h7.9M28.2 731.5h13.4M95.6 731.5h13.4M51.6 750.5h7.0M37.9 753.5h8.7M37.7 762.5h8.9M43.8 762.5h6.8M101.6 762.5h13.2M95.6 762.5h6.9M54.3 763.5h7.3M75.6 766.5h13.8M95.6 771.5h6.0M33.1 771.5h8.5M22.4 775.5h13.2M7.6 785.5h11.0M42.2 789.5h16.4M78.6 789.5h16.4M82.6 806.5h7.3M118.6 807.5h11.0M118.6 869.5h11.0M106.6 876.5h15.9M33.6 877.5h8.0M95.6 877.5h8.0M106.6 879.5h12.1M40.9 879.5h13.7M47.8 890.5h6.8M32.0 918.5h14.6M90.6 918.5h14.6M27.6 967.5h14.0M90.6 967.5h16.6M39.3 967.5h7.3M90.6 967.5h7.3M42.3 974.5h8.3M7.6 990.5h11.0" stroke="#7e7e7e" stroke-width="1" fill="none"/>
<path d="M106.6 591.5h19.8M16.0 604.5h14.6M106.6 605.5h14.9M86.6 606.5h15.2M86.6 607.5h7.0M28.0 612.5h7.6M112.6 621.5h11.3M7.6 622.5h9.0M95.6 624.5h12.7M90.6 624.5h17.3M31.9 625.5h18.7M26.1 625.5h9.5M101.6 625.5h9.5M28.8 626.5h6.8M90.6 628.5h18.8M17.4 633.5h7.2M112.6 633.5h7.2M25.5 633.5h16.1M12.4 635.5h12.2M112.6 635.5h12.2M25.0 640.5h10.6M95.6 642.5h15.7M101.6 643.5h8.8M13.7 648.5h16.9M95.6 649.5h15.7M106.6 651.5h18.9M17.6 664.5h18.0M26.1 678.5h9.5M101.6 678.5h9.5M95.6 681.5h11.4M44.4 686.5h14.2M27.4 686.5h8.2M25.3 691.5h16.3M95.6 691.5h16.3M106.6 693.5h19.1M36.1 694.5h10.5M27.6 694.5h19.0M43.3 695.5h7.3M86.6 695.5h7.3M7.6 697.5h9.0M112.6 697.5h13.1M16.3 716.5h8.3M17.2 717.5h7.4M7.6 721.5h11.0M41.2 722.5h13.4M82.6 722.5h13.4M118.6 723.5h11.0M12.4 723.5h18.2M112.6 731.5h12.8M39.8 731.5h14.8M7.6 731.5h17.0M95.6 739.5h12.2M101.6 739.5h15.6M16.0 741.5h8.6M86.6 741.5h17.3M56.8 747.5h7.8M86.6 761.5h11.4M86.6 762.5h6.8M22.4 762.5h13.2M34.7 762.5h6.9M47.8 766.5h13.8M37.2 774.5h9.4M90.6 774.5h9.4M95.6 778.5h12.7M33.8 778.5h7.8M95.6 778.5h7.8M43.7 801.5h6.9M86.6 801.5h6.9M35.9 801.5h14.7M86.6 801.5h14.7M37.5 806.5h13.1M7.6 807.5h11.0M23.6 807.5h18.0M95.6 807.5h18.0M106.6 807.5h7.8M16.2 855.5h14.4M23.5 857.5h12.1M26.1 864.5h9.5M101.6 864.5h9.5M22.7 882.5h12.9M31.8 886.5h14.8M90.6 893.5h12.0M7.6 979.5h9.0M95.6 980.5h16.3M22.5 980.5h13.1M26.7 987.5h14.9M35.2 989.5h6.4M90.6 989.5h13.7M106.6 990.5h7.9" stroke="#7e7e7e" stroke-width="1.5" fill="none"/>
<path d="M10.8 591.5h19.8M75.6 598.5h11.9M10.2 606.5h6.4M86.6 618.5h11.5M34.2 619.5h7.4M120.6 622.5h9.0M28.4 624.5h7.2M86.6 625.5h18.7M22.2 628.5h19.4M38.3 631.5h12.3M86.6 631.5h12.3M33.8 635.5h12.8M112.6 645.5h9.2M34.4 651.5h7.2M73.6 654.5h10.1M90.6 658.5h6.5M86.6 678.5h12.4M112.6 691.5h7.4M112.6 693.5h14.8M75.6 703.5h7.2M52.8 703.5h11.8M7.6 709.5h9.0M120.6 709.5h9.0M112.6 718.5h14.5M120.6 722.5h9.0M120.6 722.5h9.0M50.9 723.5h13.7M72.6 723.5h13.7M26.8 725.5h14.8M95.6 725.5h14.8M72.6 730.5h17.5M118.6 736.5h10.4M29.4 739.5h12.2M106.6 739.5h19.9M120.6 740.5h9.0M36.5 746.5h10.1M90.6 746.5h10.1M55.2 747.5h9.4M75.6 763.5h7.3M23.5 778.5h12.1M101.6 778.5h12.1M118.6 785.5h11.0M78.6 789.5h15.3M22.8 807.5h7.8M51.7 809.5h6.9M101.6 864.5h11.1M90.6 873.5h17.0M82.6 879.5h13.7M54.5 965.5h9.1M47.9 965.5h13.7M120.6 979.5h9.0M25.3 980.5h16.3M32.9 989.5h13.7M34.3 990.5h16.3M47.6 1025.5h16.0" stroke="#848484" stroke-width="1" fill="none"/>
<path d="M7.6 598.5h9.0M7.6 599.5h9.0M120.6 606.5h6.4M7.6 606.5h11.0M35.4 606.5h15.2M43.6 607.5h7.0M90.6 617.5h13.6M17.4 618.5h13.2M39.1 618.5h11.5M8.6 622.5h16.0M112.6 622.5h16.0M7.6 624.5h11.0M118.6 624.5h11.0M101.6 626.5h6.8M8.6 633.5h16.0M112.6 633.5h16.0M7.6 633.5h9.0M90.6 635.5h12.8M7.6 635.5h9.0M120.6 635.5h9.0M118.6 635.5h8.2M10.4 638.5h6.2M120.6 638.5h6.2M23.9 640.5h17.7M101.6 640.5h10.6M25.9 649.5h15.7M101.6 651.5h8.0M53.5 654.5h10.1M40.1 658.5h6.5M112.6 680.5h9.7M82.6 681.5h7.7M30.2 681.5h11.4M86.6 682.5h19.9M17.2 691.5h7.4M27.6 695.5h14.0M22.4 696.5h8.2M26.6 705.5h20.0M90.6 705.5h20.0M7.6 719.5h17.0M112.6 719.5h17.0M36.2 725.5h10.4M47.1 730.5h17.5M57.5 731.5h6.1M50.6 731.5h11.0M112.6 731.5h17.0M8.2 736.5h10.4M86.6 736.5h9.0M20.0 739.5h15.6M44.3 746.5h14.3M72.6 747.5h7.8M72.6 747.5h9.4M78.6 750.5h7.0M7.6 753.5h11.0M39.2 761.5h11.4M33.0 761.5h8.6M14.2 762.5h16.4M52.7 765.5h10.9M73.6 765.5h10.9M120.6 772.5h7.9M35.8 774.5h18.8M51.4 789.5h13.2M56.4 808.5h8.2M52.6 810.5h11.0M78.6 810.5h13.7M33.4 857.5h8.2M95.6 857.5h8.2M101.6 857.5h12.1M16.1 864.5h14.5M106.6 864.5h14.5M106.6 864.5h12.9M44.2 865.5h10.4M82.6 865.5h10.4M27.8 881.5h13.8M95.6 881.5h13.8M7.6 886.5h11.0M118.6 886.5h11.0M106.6 886.5h16.9M95.6 914.5h17.7M34.3 914.5h12.3M112.6 916.5h17.0M95.6 967.5h14.0M112.6 977.5h15.0M86.6 977.5h11.6M120.6 979.5h9.0M101.6 980.5h13.1M18.1 980.5h12.5M10.8 984.5h7.8M118.6 984.5h7.8M86.6 990.5h16.3M73.6 1025.5h16.0" stroke="#848484" stroke-width="1.5" fill="none"/>
<path d="M49.7 598.5h11.9M50.2 599.5h14.4M82.6 604.5h13.3M82.6 607.5h15.1M73.6 617.5h7.9M106.6 618.5h13.2M120.6 621.5h9.0M82.6 623.5h9.8M95.6 625.5h16.1M82.6 625.5h12.1M95.6 626.5h16.7M23.0 633.5h7.6M106.6 633.5h7.6M95.6 640.5h17.7M11.7 651.5h18.9M101.6 664.5h18.0M30.7 682.5h19.9M57.1 684.5h7.5M78.6 686.5h14.2M75.6 693.5h11.3M95.6 695.5h14.0M72.6 703.5h11.8M40.7 705.5h13.9M28.5 719.5h18.1M90.6 719.5h18.1M11.8 731.5h12.8M73.6 731.5h6.1M57.3 736.5h7.3M27.7 740.5h13.9M78.6 746.5h14.3M41.3 750.5h17.3M118.6 753.5h11.0M49.1 758.5h15.5M52.4 758.5h12.2M90.6 762.5h8.9M106.6 762.5h16.4M42.9 772.5h18.7M95.6 772.5h6.4M43.3 789.5h15.3M42.8 809.5h15.8M31.6 855.5h10.0M32.9 859.5h8.7M7.6 869.5h11.0M82.6 873.5h9.3M7.6 876.5h11.0M82.6 879.5h14.4M24.5 882.5h6.1M106.6 882.5h6.1M53.4 882.5h10.2M118.6 884.5h11.0M16.9 893.5h18.7M101.6 893.5h18.7M30.0 967.5h16.6M9.6 977.5h15.0M106.6 980.5h12.5M52.5 984.5h6.1" stroke="#8a8a8a" stroke-width="1" fill="none"/>
<path d="M72.6 599.5h14.4M118.6 606.5h11.0M120.6 609.5h9.0M101.6 612.5h14.9M101.6 612.5h17.2M101.6 621.5h14.0M7.6 621.5h9.0M118.6 622.5h7.6M44.8 623.5h9.8M25.5 625.5h16.1M42.5 625.5h12.1M95.6 628.5h19.4M7.6 629.5h9.0M120.6 629.5h9.0M28.9 631.5h6.7M10.4 635.5h8.2M95.6 640.5h10.8M118.6 645.5h11.0M15.4 645.5h9.2M27.6 651.5h8.0M95.6 651.5h7.2M40.9 654.5h17.7M47.3 655.5h7.3M82.6 655.5h7.3M25.8 655.5h15.8M95.6 655.5h15.8M39.8 665.5h14.8M82.6 665.5h14.8M90.6 665.5h13.8M106.6 669.5h18.9M38.2 678.5h12.4M14.9 680.5h9.7M46.9 681.5h7.7M26.4 682.5h15.2M95.6 682.5h15.2M72.6 684.5h7.5M48.4 688.5h15.2M73.6 688.5h15.2M9.8 693.5h14.8M50.3 693.5h11.3M106.6 696.5h8.2M47.2 696.5h7.4M54.0 718.5h9.6M7.6 722.5h9.0M57.4 723.5h7.2M72.6 723.5h7.2M90.6 725.5h10.4M72.6 730.5h7.9M75.6 731.5h11.0M41.6 736.5h9.0M10.7 739.5h19.9M95.6 740.5h13.9M7.6 740.5h9.0M33.3 741.5h17.3M78.6 750.5h17.3M57.6 753.5h6.0M72.6 758.5h12.2M95.6 761.5h8.6M35.6 771.5h6.0M35.2 772.5h6.4M8.7 772.5h7.9M82.6 774.5h18.8M55.5 792.5h6.1M75.6 792.5h6.1M73.6 808.5h16.5M72.6 808.5h8.2M78.6 809.5h15.8M48.6 809.5h13.0M78.6 809.5h6.9M73.6 810.5h11.0M73.6 810.5h9.4M44.9 810.5h13.7M95.6 855.5h10.0M7.8 861.5h16.8M25.3 862.5h16.3M95.6 862.5h16.3M17.7 864.5h12.9M40.5 867.5h14.1M45.3 873.5h9.3M29.6 873.5h17.0M112.6 874.5h8.9M14.7 876.5h15.9M13.2 878.5h17.4M106.6 878.5h17.4M13.7 886.5h16.9M82.6 890.5h6.8M13.2 893.5h17.4M106.6 893.5h17.4M23.9 914.5h17.7M75.6 965.5h13.7M7.6 979.5h9.0M106.6 983.5h19.1M118.6 983.5h11.0M38.8 989.5h7.8M90.6 989.5h7.8" stroke="#8a8a8a" stroke-width="1.5" fill="none"/>
<path d="M120.6 598.5h9.0M35.2 607.5h11.4M90.6 607.5h11.4M7.6 609.5h9.0M95.6 612.5h14.1M18.4 612.5h17.2M101.6 618.5h20.0M21.6 621.5h14.0M112.6 623.5h14.2M118.6 623.5h7.8M55.6 629.5h9.0M72.6 629.5h9.0M50.9 638.5h10.7M75.6 638.5h10.7M41.8 647.5h19.8M75.6 647.5h19.8M42.7 649.5h15.9M73.6 652.5h11.1M120.6 664.5h8.3M112.6 664.5h15.3M36.3 665.5h18.3M32.8 665.5h13.8M11.7 669.5h18.9M7.6 682.5h9.0M42.2 684.5h19.4M75.6 684.5h19.4M82.6 696.5h7.4M72.6 705.5h11.3M72.6 717.5h9.6M78.6 718.5h17.2M10.1 718.5h14.5M73.6 718.5h9.6M7.6 736.5h11.0M118.6 736.5h11.0M72.6 736.5h7.3M53.4 755.5h11.2M72.6 755.5h14.2M75.6 768.5h13.9M72.6 768.5h12.9M72.6 789.5h13.2M75.6 809.5h13.0M47.7 855.5h13.9M106.6 857.5h14.9M95.6 859.5h8.7M112.6 861.5h16.8M19.7 864.5h10.9M38.1 867.5h12.5M82.6 867.5h14.1M17.3 869.5h7.3M27.1 874.5h19.5M90.6 874.5h19.5M82.6 878.5h7.1M82.6 888.5h17.3M90.6 898.5h19.0M106.6 912.5h7.8M7.6 916.5h17.0M7.6 916.5h9.0M72.6 965.5h17.2M73.6 965.5h9.1M12.7 977.5h17.9M106.6 977.5h17.9M39.0 977.5h11.6M101.6 989.5h11.4" stroke="#909090" stroke-width="1" fill="none"/>
<path d="M55.6 596.5h9.0M41.3 604.5h13.3M39.5 607.5h15.1M95.6 609.5h9.6M35.9 611.5h18.7M82.6 611.5h18.7M20.7 612.5h14.9M55.7 617.5h7.9M43.6 622.5h7.0M28.2 622.5h7.4M11.0 622.5h7.6M10.4 623.5h14.2M10.8 623.5h7.8M16.9 626.5h13.7M24.9 626.5h16.7M30.0 628.5h16.6M90.6 628.5h16.6M44.2 629.5h14.4M120.6 633.5h9.0M75.6 633.5h10.1M11.4 636.5h19.2M106.6 636.5h19.2M7.9 636.5h10.7M118.6 636.5h10.7M30.8 640.5h10.8M7.6 645.5h11.0M48.1 648.5h6.5M82.6 648.5h6.5M57.3 652.5h6.3M78.6 654.5h17.7M17.0 658.5h13.6M106.6 658.5h13.6M8.3 664.5h8.3M82.6 665.5h18.3M86.6 668.5h10.4M72.6 680.5h7.8M10.9 694.5h7.7M118.6 694.5h7.7M46.4 695.5h17.2M72.6 703.5h13.8M54.4 703.5h7.2M55.0 717.5h9.6M43.5 718.5h15.1M50.4 755.5h14.2M72.6 758.5h15.5M120.6 762.5h9.0M47.7 768.5h13.9M75.6 772.5h18.7M53.9 774.5h10.7M72.6 774.5h10.7M75.6 785.5h7.3M7.6 806.5h9.0M120.6 806.5h9.0M47.1 808.5h16.5M54.2 810.5h9.4M7.9 857.5h10.7M118.6 857.5h10.7M118.6 861.5h11.0M106.6 864.5h10.9M7.6 865.5h9.0M120.6 865.5h9.0M86.6 867.5h12.5M15.7 874.5h8.9M118.6 876.5h11.0M44.0 877.5h6.6M86.6 877.5h6.6M40.2 879.5h14.4M73.6 882.5h10.2M7.6 884.5h11.0M37.3 888.5h17.3M72.6 893.5h13.0M7.6 895.5h11.0M106.6 898.5h8.8M22.8 912.5h7.8M8.0 916.5h16.6M112.6 916.5h16.6M120.6 916.5h9.0M72.6 974.5h17.6M11.5 983.5h19.1M7.6 983.5h11.0M44.1 985.5h17.5M54.6 987.5h9.0M73.6 987.5h9.0M24.2 989.5h11.4" stroke="#909090" stroke-width="1.5" fill="none"/>
<path d="M7.6 611.5h9.0M106.6 626.5h13.7M16.7 638.5h7.9M112.6 638.5h7.9M75.6 642.5h9.1M86.6 668.5h11.4M49.1 682.5h12.5M72.6 691.5h10.4M53.6 692.5h10.0M55.3 696.5h8.3M41.4 718.5h17.2M44.9 736.5h13.7M75.6 753.5h16.9M73.6 753.5h6.0M75.6 755.5h18.8M52.4 772.5h12.2M47.3 865.5h17.3M72.6 865.5h17.3M22.5 866.5h19.1M112.6 869.5h7.3M120.6 874.5h9.0M7.6 876.5h11.0M52.8 876.5h11.8M47.5 878.5h7.1M41.9 878.5h16.7M120.6 879.5h9.0M7.6 884.5h17.0M51.6 893.5h13.0M43.4 898.5h7.2M86.6 898.5h7.2M7.6 918.5h9.0M47.0 974.5h17.6M82.6 977.5h8.8" stroke="#969696" stroke-width="1" fill="none"/>
<path d="M72.6 596.5h9.0M73.6 605.5h11.1M47.3 605.5h14.3M75.6 605.5h14.3M32.0 609.5h9.6M49.2 611.5h9.4M120.6 611.5h9.0M27.5 612.5h14.1M106.6 612.5h8.9M27.7 612.5h18.9M90.6 612.5h18.9M15.6 618.5h20.0M86.6 622.5h7.0M101.6 622.5h7.4M50.4 629.5h14.2M72.6 629.5h14.2M78.6 629.5h14.4M101.6 631.5h6.7M51.5 633.5h10.1M45.2 642.5h18.4M34.9 645.5h15.7M86.6 645.5h15.7M7.6 648.5h9.0M78.6 649.5h15.9M51.3 652.5h13.3M52.5 652.5h11.1M73.6 652.5h6.3M9.3 664.5h15.3M101.6 666.5h9.7M90.6 668.5h17.8M40.2 668.5h10.4M33.6 669.5h13.0M90.6 669.5h13.0M95.6 669.5h12.3M120.6 682.5h9.0M47.4 691.5h11.2M78.6 691.5h11.2M54.2 691.5h10.4M47.5 691.5h11.1M73.6 692.5h9.0M73.6 695.5h17.2M73.6 696.5h8.3M78.6 696.5h11.0M50.8 703.5h13.8M43.1 704.5h15.5M78.6 704.5h15.5M82.6 705.5h13.9M53.3 709.5h10.3M41.8 713.5h12.8M78.6 718.5h15.1M49.4 719.5h9.2M54.6 740.5h7.0M78.6 753.5h17.7M44.7 753.5h16.9M42.8 755.5h18.8M72.6 755.5h11.2M53.7 761.5h7.9M75.6 761.5h7.9M7.6 762.5h9.0M75.6 768.5h16.4M51.7 768.5h12.9M78.6 785.5h7.7M72.6 801.5h16.8M75.6 855.5h13.9M78.6 855.5h18.7M15.7 857.5h14.9M20.9 857.5h9.7M34.1 858.5h7.5M95.6 858.5h7.5M75.6 861.5h7.2M7.6 861.5h11.0M17.0 866.5h18.6M95.6 866.5h19.1M51.4 869.5h10.2M75.6 869.5h10.2M7.6 874.5h9.0M7.6 876.5h11.0M118.6 876.5h11.0M73.6 877.5h10.0M86.6 881.5h12.7M47.6 888.5h14.0M75.6 888.5h14.0M45.9 890.5h12.7M78.6 890.5h12.7M118.6 895.5h11.0M106.6 897.5h18.3M21.8 898.5h8.8M27.6 898.5h19.0M101.6 912.5h13.6M112.6 918.5h6.0M120.6 918.5h9.0M54.7 977.5h6.9M45.8 977.5h8.8M72.6 979.5h12.3M112.6 979.5h15.0M78.6 984.5h6.1M75.6 985.5h17.5" stroke="#969696" stroke-width="1.5" fill="none"/>
<path d="M52.5 605.5h11.1M7.6 609.5h9.0M46.8 618.5h17.8M73.6 624.5h12.3M7.6 631.5h11.0M118.6 631.5h11.0M52.5 642.5h9.1M75.6 643.5h19.1M72.6 643.5h8.7M120.6 645.5h9.0M120.6 648.5h9.0M28.4 662.5h13.2M39.2 668.5h11.4M29.3 669.5h12.3M56.8 680.5h7.8M75.6 682.5h12.5M54.6 692.5h9.0M75.6 695.5h19.7M47.6 696.5h11.0M7.6 709.5h11.0M73.6 709.5h18.9M54.7 713.5h9.9M78.6 736.5h13.7M75.6 740.5h7.0M45.2 768.5h16.4M54.3 785.5h7.3M47.8 801.5h16.8M10.2 858.5h14.4M11.0 862.5h13.6M112.6 862.5h13.6M51.3 864.5h12.3M101.6 866.5h18.6M90.6 873.5h8.7M95.6 873.5h19.1M34.1 873.5h7.5M39.4 881.5h19.2M42.0 882.5h19.6M112.6 884.5h17.0M112.6 888.5h12.4M51.4 974.5h12.2M73.6 974.5h12.2M9.6 979.5h15.0M73.6 983.5h16.0M49.2 989.5h9.4" stroke="#9c9c9c" stroke-width="1" fill="none"/>
<path d="M73.6 606.5h7.1M44.4 607.5h14.2M120.6 609.5h9.0M21.7 612.5h8.9M72.6 618.5h17.8M54.8 623.5h9.8M72.6 623.5h9.8M42.3 625.5h16.3M78.6 625.5h16.3M46.7 631.5h16.9M43.6 642.5h20.0M73.6 642.5h20.0M73.6 642.5h18.4M42.5 643.5h19.1M55.9 643.5h8.7M51.6 647.5h10.0M75.6 647.5h10.0M7.6 651.5h11.0M118.6 651.5h11.0M72.6 652.5h13.3M95.6 657.5h14.2M8.0 657.5h10.6M41.0 662.5h9.6M86.6 662.5h9.6M118.6 662.5h11.0M95.6 664.5h14.2M112.6 665.5h15.7M25.3 666.5h10.3M25.9 666.5h9.7M73.6 678.5h7.5M72.6 678.5h16.8M56.4 680.5h7.2M47.9 680.5h15.7M73.6 680.5h15.7M78.6 691.5h11.1M73.6 692.5h10.0M52.4 695.5h6.2M41.9 695.5h19.7M53.3 705.5h11.3M118.6 709.5h11.0M73.6 709.5h10.3M82.6 713.5h12.8M78.6 719.5h9.2M40.9 753.5h17.7M72.6 772.5h12.2M50.9 785.5h7.7M49.2 807.5h14.4M73.6 807.5h14.4M39.9 855.5h18.7M106.6 857.5h9.7M112.6 858.5h14.4M73.6 864.5h12.3M57.2 869.5h6.4M37.9 873.5h8.7M95.6 873.5h7.5M72.6 876.5h11.8M53.6 877.5h10.0M7.6 879.5h9.0M37.9 881.5h12.7M75.6 882.5h19.6M12.2 888.5h12.4M12.3 897.5h18.3M22.0 912.5h13.6M55.8 914.5h8.8M72.6 914.5h8.8M54.1 914.5h10.5M18.6 918.5h6.0M47.4 965.5h17.2M45.7 974.5h12.9M75.6 977.5h6.9M8.1 983.5h8.5M120.6 983.5h8.5M47.6 983.5h16.0" stroke="#9c9c9c" stroke-width="1.5" fill="none"/>
<path d="M56.5 606.5h7.1M118.6 607.5h6.9M78.6 611.5h9.4M78.6 623.5h19.3M51.3 624.5h12.3M57.2 626.5h6.4M73.6 626.5h6.4M73.6 631.5h16.9M44.8 655.5h13.8M78.6 655.5h13.8M27.4 657.5h14.2M75.6 658.5h14.5M55.9 664.5h8.7M72.6 664.5h8.7M28.8 668.5h17.8M90.6 669.5h16.9M56.1 678.5h7.5M47.8 678.5h16.8M73.6 680.5h7.2M78.6 695.5h6.2M44.3 696.5h19.3M44.7 709.5h18.9M28.7 858.5h12.9M95.6 858.5h12.9M72.6 859.5h15.6M120.6 862.5h9.0M72.6 877.5h17.2M78.6 878.5h16.7M78.6 881.5h19.2M86.6 898.5h8.1M75.6 974.5h19.7M75.6 977.5h16.4M78.6 983.5h19.7M50.7 989.5h7.9M78.6 989.5h9.4" stroke="#a2a2a2" stroke-width="1" fill="none"/>
<path d="M39.3 623.5h19.3M54.4 631.5h7.2M75.6 631.5h7.2M10.7 636.5h7.9M118.6 636.5h7.9M7.6 636.5h11.0M118.6 636.5h11.0M7.6 645.5h9.0M50.0 651.5h11.6M55.6 651.5h9.0M72.6 651.5h9.0M118.6 657.5h10.6M47.1 658.5h14.5M106.6 660.5h17.5M95.6 662.5h13.2M7.6 662.5h11.0M27.4 664.5h14.2M8.9 665.5h15.7M72.6 665.5h8.1M17.8 668.5h17.8M101.6 668.5h17.8M73.6 678.5h10.7M73.6 696.5h19.3M52.8 705.5h11.8M72.6 713.5h9.9M56.4 859.5h7.2M54.4 861.5h7.2M73.6 869.5h15.9M73.6 869.5h6.4M78.6 871.5h9.8M22.5 873.5h19.1M118.6 876.5h11.0M47.4 877.5h17.2M11.9 884.5h12.7M112.6 884.5h12.7M120.6 895.5h9.0M42.5 898.5h8.1M46.0 914.5h15.6M75.6 914.5h15.6M43.9 914.5h17.7M75.6 914.5h17.7M72.6 914.5h10.5M78.6 974.5h12.9M52.3 979.5h12.3M38.9 983.5h19.7M47.9 983.5h13.7M78.6 989.5h7.9" stroke="#a2a2a2" stroke-width="1.5" fill="none"/>
<path d="M78.6 607.5h14.2M52.0 631.5h9.6M75.6 648.5h14.5M82.6 657.5h17.4M13.1 660.5h17.5M56.5 665.5h8.1M75.6 665.5h20.0M44.7 669.5h16.9M54.3 678.5h9.3M73.6 678.5h9.3M72.6 705.5h11.8M49.0 859.5h15.6M7.6 862.5h9.0M73.6 866.5h19.2M50.9 867.5h7.7M78.6 867.5h7.7M47.7 869.5h15.9M75.6 871.5h19.1M9.4 871.5h15.2M112.6 871.5h15.2M41.7 879.5h19.9M75.6 879.5h19.9M112.6 895.5h13.1M48.1 897.5h16.5M73.6 912.5h19.9" stroke="#a8a8a8" stroke-width="1" fill="none"/>
<path d="M11.7 607.5h6.9M43.8 609.5h14.8M47.1 648.5h14.5M31.9 657.5h18.7M101.6 666.5h10.3M29.7 669.5h16.9M73.6 859.5h7.2M49.1 859.5h12.5M75.6 859.5h12.5M44.4 866.5h19.2M42.5 871.5h19.1M48.8 871.5h9.8M49.5 874.5h14.1M73.6 874.5h14.1M72.6 878.5h17.7M49.3 884.5h9.3M11.5 895.5h13.1M7.6 895.5h9.0M45.8 897.5h17.8M75.6 897.5h10.0M43.7 912.5h19.9M43.7 916.5h19.9M72.6 967.5h19.6M75.6 967.5h17.1M41.9 974.5h19.7M45.2 977.5h16.4M75.6 983.5h13.7" stroke="#a8a8a8" stroke-width="1.5" fill="none"/>
<path d="M78.6 609.5h14.8M75.6 651.5h11.6M19.3 662.5h16.3M46.9 878.5h17.7M72.6 897.5h16.5M43.7 912.5h19.9M73.6 916.5h19.9M45.0 967.5h19.6" stroke="#aeaeae" stroke-width="1" fill="none"/>
<path d="M75.6 631.5h9.6M86.6 657.5h18.7M37.2 657.5h17.4M101.6 662.5h16.3M41.6 665.5h20.0M50.4 668.5h11.2M75.6 668.5h11.2M52.9 678.5h10.7M55.9 713.5h8.7M72.6 713.5h8.7M49.8 858.5h8.8M78.6 858.5h8.8M73.6 862.5h11.5M75.6 866.5h12.3M46.2 873.5h15.4M75.6 873.5h15.4M78.6 884.5h9.3M73.6 897.5h17.8M48.0 898.5h13.6M44.5 967.5h17.1" stroke="#aeaeae" stroke-width="1.5" fill="none"/>
<path d="M75.6 669.5h16.9M55.6 669.5h9.0M49.3 866.5h12.3" stroke="#b4b4b4" stroke-width="1" fill="none"/>
<path d="M75.6 660.5h10.7M72.6 669.5h9.0M52.1 862.5h11.5M51.6 897.5h10.0M75.6 898.5h13.6M73.6 912.5h19.9" stroke="#b4b4b4" stroke-width="1.5" fill="none"/>
<path d="M54.2 660.5h10.4M72.6 660.5h10.4M52.6 668.5h9.0" stroke="#bababa" stroke-width="1" fill="none"/>
<path d="M50.9 660.5h10.7M75.6 666.5h18.0M75.6 668.5h9.0" stroke="#bababa" stroke-width="1.5" fill="none"/>
<path d="M43.6 666.5h18.0" stroke="#c0c0c0" stroke-width="1" fill="none"/>
<ellipse cx="68.6" cy="593.0" rx="8.6" ry="3.5" fill="#8a8a8a" opacity=".85"/>
<ellipse cx="68.6" cy="599.0" rx="15.2" ry="2.5" fill="#8e8e8e" opacity=".85"/>
<ellipse cx="68.6" cy="613.0" rx="9.8" ry="2.5" fill="#8b8b8b" opacity=".85"/>
<ellipse cx="68.6" cy="621.0" rx="8.8" ry="2.5" fill="#959595" opacity=".85"/>
<ellipse cx="68.6" cy="631.0" rx="12.2" ry="4.5" fill="#8c8c8c" opacity=".85"/>
<ellipse cx="68.6" cy="652.0" rx="10.4" ry="3.5" fill="#7f7f7f" opacity=".85"/>
<ellipse cx="68.6" cy="659.0" rx="7.2" ry="3.5" fill="#888888" opacity=".85"/>
<ellipse cx="68.6" cy="669.5" rx="14.3" ry="2.0" fill="#909090" opacity=".85"/>
<ellipse cx="68.6" cy="679.5" rx="10.0" ry="3.0" fill="#888888" opacity=".85"/>
<ellipse cx="68.6" cy="700.0" rx="13.0" ry="4.5" fill="#8a8a8a" opacity=".85"/>
<ellipse cx="68.6" cy="721.0" rx="15.2" ry="4.5" fill="#898989" opacity=".85"/>
<ellipse cx="68.6" cy="743.5" rx="10.7" ry="3.0" fill="#939393" opacity=".85"/>
<ellipse cx="68.6" cy="764.0" rx="9.8" ry="4.5" fill="#959595" opacity=".85"/>
<ellipse cx="68.6" cy="776.0" rx="14.8" ry="2.5" fill="#919191" opacity=".85"/>
<ellipse cx="68.6" cy="794.5" rx="8.1" ry="3.0" fill="#929292" opacity=".85"/>
<ellipse cx="68.6" cy="811.5" rx="10.2" ry="4.0" fill="#909090" opacity=".85"/>
<ellipse cx="68.6" cy="859.0" rx="9.6" ry="4.5" fill="#898989" opacity=".85"/>
<ellipse cx="68.6" cy="868.0" rx="15.3" ry="4.5" fill="#828282" opacity=".85"/>
<ellipse cx="68.6" cy="878.0" rx="8.6" ry="2.5" fill="#979797" opacity=".85"/>
<ellipse cx="68.6" cy="888.0" rx="15.3" ry="3.5" fill="#979797" opacity=".85"/>
<ellipse cx="68.6" cy="897.5" rx="8.1" ry="2.0" fill="#909090" opacity=".85"/>
<ellipse cx="68.6" cy="914.5" rx="9.4" ry="4.0" fill="#8a8a8a" opacity=".85"/>
<ellipse cx="68.6" cy="967.0" rx="8.7" ry="3.5" fill="#969696" opacity=".85"/>
<ellipse cx="68.6" cy="983.0" rx="13.1" ry="4.5" fill="#969696" opacity=".85"/>
<ellipse cx="68.6" cy="993.0" rx="13.8" ry="4.5" fill="#939393" opacity=".85"/>
<rect x="713.200" y="578" width="3.600" height="454" fill="#545454" opacity=".9"/>
<rect x="713.6" y="578" width="2.8" height="7" fill="#727272"/><rect x="713.6" y="585" width="2.8" height="5" fill="#787878"/><rect x="713.6" y="590" width="2.8" height="3" fill="#727272"/><rect x="713.6" y="593" width="2.8" height="14" fill="#727272"/><rect x="713.6" y="607" width="2.8" height="3" fill="#6c6c6c"/><rect x="713.6" y="610" width="2.8" height="8" fill="#8a8a8a"/><rect x="713.6" y="618" width="2.8" height="6" fill="#808080"/><rect x="713.6" y="624" width="2.8" height="3" fill="#808080"/><rect x="713.6" y="627" width="2.8" height="5" fill="#8a8a8a"/><rect x="713.6" y="632" width="2.8" height="7" fill="#646464"/><rect x="713.6" y="639" width="2.8" height="13" fill="#787878"/><rect x="713.6" y="664" width="2.8" height="7" fill="#6c6c6c"/><rect x="713.6" y="671" width="2.8" height="13" fill="#727272"/><rect x="713.6" y="684" width="2.8" height="14" fill="#8a8a8a"/><rect x="713.6" y="723" width="2.8" height="14" fill="#808080"/><rect x="713.6" y="751" width="2.8" height="10" fill="#787878"/><rect x="713.6" y="761" width="2.8" height="10" fill="#808080"/><rect x="713.6" y="771" width="2.8" height="8" fill="#808080"/><rect x="713.6" y="779" width="2.8" height="11" fill="#6c6c6c"/><rect x="713.6" y="790" width="2.8" height="14" fill="#808080"/><rect x="713.6" y="804" width="2.8" height="9" fill="#8a8a8a"/><rect x="713.6" y="813" width="2.8" height="12" fill="#727272"/><rect x="713.6" y="825" width="2.8" height="8" fill="#787878"/><rect x="713.6" y="833" width="2.8" height="4" fill="#727272"/><rect x="713.6" y="837" width="2.8" height="8" fill="#727272"/><rect x="713.6" y="845" width="2.8" height="4" fill="#646464"/><rect x="713.6" y="849" width="2.8" height="13" fill="#6c6c6c"/><rect x="713.6" y="862" width="2.8" height="9" fill="#727272"/><rect x="713.6" y="871" width="2.8" height="8" fill="#6c6c6c"/><rect x="713.6" y="879" width="2.8" height="14" fill="#6c6c6c"/><rect x="713.6" y="893" width="2.8" height="13" fill="#6c6c6c"/><rect x="713.6" y="906" width="2.8" height="11" fill="#8a8a8a"/><rect x="713.6" y="917" width="2.8" height="3" fill="#646464"/><rect x="713.6" y="930" width="2.8" height="3" fill="#646464"/><rect x="713.6" y="933" width="2.8" height="5" fill="#646464"/><rect x="713.6" y="938" width="2.8" height="9" fill="#6c6c6c"/><rect x="713.6" y="947" width="2.8" height="9" fill="#6c6c6c"/><rect x="713.6" y="956" width="2.8" height="12" fill="#6c6c6c"/><rect x="713.6" y="968" width="2.8" height="7" fill="#646464"/><rect x="713.6" y="975" width="2.8" height="3" fill="#6c6c6c"/><rect x="713.6" y="978" width="2.8" height="5" fill="#727272"/><rect x="713.6" y="983" width="2.8" height="7" fill="#6c6c6c"/><rect x="713.6" y="990" width="2.8" height="10" fill="#787878"/><rect x="713.6" y="1000" width="2.8" height="4" fill="#6c6c6c"/><rect x="713.6" y="1004" width="2.8" height="12" fill="#646464"/><rect x="713.6" y="1016" width="2.8" height="14" fill="#808080"/><rect x="713.6" y="1030" width="2.8" height="2" fill="#8a8a8a"/>
<rect x="764" y="578" width="20" height="454" fill="#3a3a3a" opacity=".6"/>
<rect x="771.500" y="578" width="5" height="454" fill="#5c5c5c"/>
<rect x="772.3" y="578" width="3.4" height="7" fill="#9c9c9c"/><rect x="772.3" y="585" width="3.4" height="13" fill="#9c9c9c"/><rect x="772.3" y="611" width="3.4" height="11" fill="#949494"/><rect x="772.3" y="622" width="3.4" height="6" fill="#989898"/><rect x="772.3" y="628" width="3.4" height="4" fill="#8c8c8c"/><rect x="772.3" y="632" width="3.4" height="14" fill="#949494"/><rect x="772.3" y="646" width="3.4" height="7" fill="#949494"/><rect x="772.3" y="653" width="3.4" height="4" fill="#989898"/><rect x="772.3" y="657" width="3.4" height="12" fill="#9c9c9c"/><rect x="772.3" y="669" width="3.4" height="8" fill="#9c9c9c"/><rect x="772.3" y="677" width="3.4" height="14" fill="#949494"/><rect x="772.3" y="691" width="3.4" height="13" fill="#949494"/><rect x="772.3" y="704" width="3.4" height="6" fill="#9c9c9c"/><rect x="772.3" y="710" width="3.4" height="5" fill="#686868"/><rect x="772.3" y="715" width="3.4" height="9" fill="#6e6e6e"/><rect x="772.3" y="724" width="3.4" height="8" fill="#929292"/><rect x="772.3" y="732" width="3.4" height="10" fill="#868686"/><rect x="772.3" y="742" width="3.4" height="3" fill="#7c7c7c"/><rect x="772.3" y="745" width="3.4" height="4" fill="#929292"/><rect x="772.3" y="749" width="3.4" height="5" fill="#686868"/><rect x="772.3" y="754" width="3.4" height="5" fill="#929292"/><rect x="772.3" y="759" width="3.4" height="7" fill="#747474"/><rect x="772.3" y="766" width="3.4" height="9" fill="#868686"/><rect x="772.3" y="775" width="3.4" height="5" fill="#929292"/><rect x="772.3" y="780" width="3.4" height="13" fill="#747474"/><rect x="772.3" y="806" width="3.4" height="4" fill="#7c7c7c"/><rect x="772.3" y="810" width="3.4" height="9" fill="#686868"/><rect x="772.3" y="819" width="3.4" height="8" fill="#929292"/><rect x="772.3" y="827" width="3.4" height="6" fill="#6e6e6e"/><rect x="772.3" y="833" width="3.4" height="3" fill="#868686"/><rect x="772.3" y="836" width="3.4" height="3" fill="#868686"/><rect x="772.3" y="839" width="3.4" height="5" fill="#686868"/><rect x="772.3" y="844" width="3.4" height="3" fill="#7c7c7c"/><rect x="772.3" y="847" width="3.4" height="13" fill="#686868"/><rect x="772.3" y="860" width="3.4" height="4" fill="#868686"/><rect x="772.3" y="864" width="3.4" height="7" fill="#929292"/><rect x="772.3" y="871" width="3.4" height="6" fill="#686868"/><rect x="772.3" y="877" width="3.4" height="12" fill="#6e6e6e"/><rect x="772.3" y="889" width="3.4" height="6" fill="#6e6e6e"/><rect x="772.3" y="895" width="3.4" height="3" fill="#686868"/><rect x="772.3" y="898" width="3.4" height="6" fill="#868686"/><rect x="772.3" y="904" width="3.4" height="8" fill="#686868"/><rect x="772.3" y="912" width="3.4" height="11" fill="#686868"/><rect x="772.3" y="923" width="3.4" height="11" fill="#929292"/><rect x="772.3" y="934" width="3.4" height="5" fill="#929292"/><rect x="772.3" y="939" width="3.4" height="14" fill="#868686"/><rect x="772.3" y="953" width="3.4" height="10" fill="#6e6e6e"/><rect x="772.3" y="963" width="3.4" height="8" fill="#747474"/><rect x="772.3" y="981" width="3.4" height="3" fill="#929292"/><rect x="772.3" y="984" width="3.4" height="7" fill="#7c7c7c"/><rect x="772.3" y="991" width="3.4" height="13" fill="#929292"/><rect x="772.3" y="1004" width="3.4" height="9" fill="#686868"/><rect x="772.3" y="1013" width="3.4" height="7" fill="#868686"/><rect x="772.3" y="1020" width="3.4" height="3" fill="#747474"/><rect x="772.3" y="1023" width="3.4" height="5" fill="#7c7c7c"/>
<rect x="780.2" y="591" width="1.6" height="13" fill="#565656"/><rect x="780.2" y="604" width="1.6" height="5" fill="#4e4e4e"/><rect x="780.2" y="624" width="1.6" height="12" fill="#5e5e5e"/><rect x="780.2" y="667" width="1.6" height="14" fill="#4e4e4e"/><rect x="780.2" y="715" width="1.6" height="11" fill="#565656"/><rect x="780.2" y="735" width="1.6" height="12" fill="#4e4e4e"/><rect x="780.2" y="755" width="1.6" height="11" fill="#565656"/><rect x="780.2" y="824" width="1.6" height="3" fill="#5e5e5e"/><rect x="780.2" y="871" width="1.6" height="3" fill="#5e5e5e"/><rect x="780.2" y="882" width="1.6" height="5" fill="#5e5e5e"/><rect x="780.2" y="915" width="1.6" height="9" fill="#5e5e5e"/>
<rect x="766.2" y="595" width="1.6" height="14" fill="#4e4e4e"/><rect x="766.2" y="637" width="1.6" height="5" fill="#565656"/><rect x="766.2" y="642" width="1.6" height="8" fill="#4e4e4e"/><rect x="766.2" y="664" width="1.6" height="5" fill="#4e4e4e"/><rect x="766.2" y="669" width="1.6" height="11" fill="#4e4e4e"/><rect x="766.2" y="714" width="1.6" height="4" fill="#5e5e5e"/><rect x="766.2" y="729" width="1.6" height="9" fill="#4e4e4e"/><rect x="766.2" y="738" width="1.6" height="10" fill="#5e5e5e"/><rect x="766.2" y="756" width="1.6" height="6" fill="#5e5e5e"/><rect x="766.2" y="781" width="1.6" height="5" fill="#4e4e4e"/><rect x="766.2" y="786" width="1.6" height="13" fill="#5e5e5e"/><rect x="766.2" y="799" width="1.6" height="6" fill="#565656"/><rect x="766.2" y="854" width="1.6" height="7" fill="#4e4e4e"/><rect x="766.2" y="883" width="1.6" height="6" fill="#5e5e5e"/><rect x="766.2" y="938" width="1.6" height="5" fill="#4e4e4e"/><rect x="766.2" y="951" width="1.6" height="6" fill="#4e4e4e"/><rect x="766.2" y="1011" width="1.6" height="5" fill="#4e4e4e"/><rect x="766.2" y="1031" width="1.6" height="1" fill="#565656"/>
<rect x="973.800" y="578" width="2.400" height="417" fill="#484848"/><rect x="974" y="995" width="2" height="37" fill="#3c3c3c"/>
<rect x="974.0" y="578" width="2.0" height="3" fill="#565656"/><rect x="974.0" y="581" width="2.0" height="7" fill="#505050"/><rect x="974.0" y="588" width="2.0" height="4" fill="#505050"/><rect x="974.0" y="592" width="2.0" height="10" fill="#505050"/><rect x="974.0" y="602" width="2.0" height="5" fill="#5c5c5c"/><rect x="974.0" y="607" width="2.0" height="3" fill="#565656"/><rect x="974.0" y="610" width="2.0" height="3" fill="#565656"/><rect x="974.0" y="613" width="2.0" height="10" fill="#505050"/><rect x="974.0" y="623" width="2.0" height="14" fill="#565656"/><rect x="974.0" y="651" width="2.0" height="7" fill="#565656"/><rect x="974.0" y="658" width="2.0" height="6" fill="#505050"/><rect x="974.0" y="664" width="2.0" height="10" fill="#505050"/><rect x="974.0" y="674" width="2.0" height="11" fill="#5c5c5c"/><rect x="974.0" y="694" width="2.0" height="12" fill="#5c5c5c"/><rect x="974.0" y="706" width="2.0" height="12" fill="#565656"/><rect x="974.0" y="718" width="2.0" height="7" fill="#565656"/><rect x="974.0" y="732" width="2.0" height="10" fill="#505050"/><rect x="974.0" y="755" width="2.0" height="10" fill="#505050"/><rect x="974.0" y="765" width="2.0" height="10" fill="#505050"/><rect x="974.0" y="775" width="2.0" height="8" fill="#565656"/><rect x="974.0" y="783" width="2.0" height="11" fill="#505050"/><rect x="974.0" y="794" width="2.0" height="9" fill="#505050"/><rect x="974.0" y="803" width="2.0" height="10" fill="#484848"/><rect x="974.0" y="825" width="2.0" height="10" fill="#545454"/><rect x="974.0" y="835" width="2.0" height="4" fill="#484848"/><rect x="974.0" y="842" width="2.0" height="14" fill="#484848"/><rect x="974.0" y="856" width="2.0" height="5" fill="#484848"/><rect x="974.0" y="861" width="2.0" height="14" fill="#484848"/><rect x="974.0" y="875" width="2.0" height="10" fill="#4e4e4e"/><rect x="974.0" y="890" width="2.0" height="12" fill="#545454"/><rect x="974.0" y="902" width="2.0" height="9" fill="#545454"/><rect x="974.0" y="911" width="2.0" height="13" fill="#4e4e4e"/><rect x="974.0" y="924" width="2.0" height="10" fill="#545454"/><rect x="974.0" y="934" width="2.0" height="4" fill="#545454"/><rect x="974.0" y="938" width="2.0" height="13" fill="#545454"/><rect x="974.0" y="951" width="2.0" height="3" fill="#545454"/><rect x="974.0" y="954" width="2.0" height="9" fill="#484848"/><rect x="974.0" y="974" width="2.0" height="11" fill="#484848"/><rect x="974.0" y="985" width="2.0" height="6" fill="#484848"/><rect x="974.0" y="991" width="2.0" height="8" fill="#4e4e4e"/>
<rect x="1184.600" y="578" width="3" height="454" fill="#424242"/>
<rect x="1184.8" y="578" width="2.4" height="8" fill="#5a5a5a"/><rect x="1184.8" y="586" width="2.4" height="2" fill="#606060"/><rect x="1184.8" y="596" width="2.4" height="8" fill="#4e4e4e"/><rect x="1184.8" y="612" width="2.4" height="5" fill="#4e4e4e"/><rect x="1184.8" y="617" width="2.4" height="2" fill="#4e4e4e"/><rect x="1184.8" y="619" width="2.4" height="2" fill="#5a5a5a"/><rect x="1184.8" y="621" width="2.4" height="2" fill="#5a5a5a"/><rect x="1184.8" y="623" width="2.4" height="8" fill="#545454"/><rect x="1184.8" y="631" width="2.4" height="6" fill="#545454"/><rect x="1184.8" y="637" width="2.4" height="4" fill="#5a5a5a"/><rect x="1184.8" y="641" width="2.4" height="6" fill="#606060"/><rect x="1184.8" y="647" width="2.4" height="4" fill="#545454"/><rect x="1184.8" y="651" width="2.4" height="7" fill="#545454"/><rect x="1184.8" y="658" width="2.4" height="4" fill="#606060"/><rect x="1184.8" y="662" width="2.4" height="8" fill="#4e4e4e"/><rect x="1184.8" y="670" width="2.4" height="3" fill="#545454"/><rect x="1184.8" y="673" width="2.4" height="2" fill="#545454"/><rect x="1184.8" y="675" width="2.4" height="5" fill="#545454"/><rect x="1184.8" y="695" width="2.4" height="7" fill="#4e4e4e"/><rect x="1184.8" y="702" width="2.4" height="7" fill="#5a5a5a"/><rect x="1184.8" y="709" width="2.4" height="6" fill="#545454"/><rect x="1184.8" y="715" width="2.4" height="2" fill="#5a5a5a"/><rect x="1184.8" y="717" width="2.4" height="8" fill="#545454"/><rect x="1184.8" y="725" width="2.4" height="6" fill="#4e4e4e"/><rect x="1184.8" y="731" width="2.4" height="6" fill="#606060"/><rect x="1184.8" y="737" width="2.4" height="4" fill="#606060"/><rect x="1184.8" y="746" width="2.4" height="3" fill="#606060"/><rect x="1184.8" y="749" width="2.4" height="4" fill="#606060"/><rect x="1184.8" y="760" width="2.4" height="7" fill="#606060"/><rect x="1184.8" y="767" width="2.4" height="4" fill="#4e4e4e"/><rect x="1184.8" y="771" width="2.4" height="5" fill="#5a5a5a"/><rect x="1184.8" y="776" width="2.4" height="4" fill="#606060"/><rect x="1184.8" y="780" width="2.4" height="5" fill="#5a5a5a"/><rect x="1184.8" y="791" width="2.4" height="3" fill="#4e4e4e"/><rect x="1184.8" y="794" width="2.4" height="4" fill="#606060"/><rect x="1184.8" y="798" width="2.4" height="4" fill="#606060"/><rect x="1184.8" y="802" width="2.4" height="5" fill="#606060"/><rect x="1184.8" y="813" width="2.4" height="6" fill="#606060"/><rect x="1184.8" y="831" width="2.4" height="7" fill="#4e4e4e"/><rect x="1184.8" y="838" width="2.4" height="4" fill="#4e4e4e"/><rect x="1184.8" y="842" width="2.4" height="7" fill="#5a5a5a"/><rect x="1184.8" y="856" width="2.4" height="5" fill="#545454"/><rect x="1184.8" y="867" width="2.4" height="3" fill="#5a5a5a"/><rect x="1184.8" y="870" width="2.4" height="2" fill="#4e4e4e"/><rect x="1184.8" y="901" width="2.4" height="4" fill="#606060"/><rect x="1184.8" y="905" width="2.4" height="3" fill="#5a5a5a"/><rect x="1184.8" y="911" width="2.4" height="6" fill="#5a5a5a"/><rect x="1184.8" y="917" width="2.4" height="6" fill="#4e4e4e"/><rect x="1184.8" y="923" width="2.4" height="8" fill="#545454"/><rect x="1184.8" y="931" width="2.4" height="7" fill="#4e4e4e"/><rect x="1184.8" y="938" width="2.4" height="8" fill="#5a5a5a"/><rect x="1184.8" y="953" width="2.4" height="5" fill="#606060"/><rect x="1184.8" y="962" width="2.4" height="5" fill="#545454"/><rect x="1184.8" y="967" width="2.4" height="6" fill="#4e4e4e"/><rect x="1184.8" y="973" width="2.4" height="3" fill="#4e4e4e"/><rect x="1184.8" y="976" width="2.4" height="4" fill="#545454"/><rect x="1184.8" y="993" width="2.4" height="7" fill="#545454"/><rect x="1184.8" y="1000" width="2.4" height="2" fill="#606060"/><rect x="1184.8" y="1002" width="2.4" height="3" fill="#606060"/><rect x="1184.8" y="1005" width="2.4" height="4" fill="#606060"/><rect x="1184.8" y="1009" width="2.4" height="4" fill="#5a5a5a"/><rect x="1184.8" y="1013" width="2.4" height="5" fill="#545454"/><rect x="1184.8" y="1018" width="2.4" height="7" fill="#606060"/><rect x="1184.8" y="1025" width="2.4" height="2" fill="#545454"/><rect x="1184.8" y="1027" width="2.4" height="5" fill="#545454"/>
<rect x="1301" y="578" width="5.400" height="454" fill="#4e4e4e"/>
<rect x="1302.0" y="578" width="3.2" height="13" fill="#6e6e6e"/><rect x="1302.0" y="591" width="3.2" height="16" fill="#787878"/><rect x="1302.0" y="607" width="3.2" height="9" fill="#848484"/><rect x="1302.0" y="616" width="3.2" height="16" fill="#787878"/><rect x="1302.0" y="632" width="3.2" height="13" fill="#747474"/><rect x="1302.0" y="645" width="3.2" height="11" fill="#6e6e6e"/><rect x="1302.0" y="656" width="3.2" height="8" fill="#626262"/><rect x="1302.0" y="664" width="3.2" height="5" fill="#626262"/><rect x="1302.0" y="669" width="3.2" height="4" fill="#747474"/><rect x="1302.0" y="673" width="3.2" height="14" fill="#6e6e6e"/><rect x="1302.0" y="687" width="3.2" height="16" fill="#6a6a6a"/><rect x="1302.0" y="703" width="3.2" height="5" fill="#666666"/><rect x="1302.0" y="708" width="3.2" height="5" fill="#626262"/><rect x="1302.0" y="713" width="3.2" height="7" fill="#626262"/><rect x="1302.0" y="720" width="3.2" height="8" fill="#6a6a6a"/><rect x="1302.0" y="728" width="3.2" height="7" fill="#666666"/><rect x="1302.0" y="735" width="3.2" height="15" fill="#6a6a6a"/><rect x="1302.0" y="750" width="3.2" height="4" fill="#6a6a6a"/><rect x="1302.0" y="754" width="3.2" height="11" fill="#666666"/><rect x="1302.0" y="765" width="3.2" height="6" fill="#666666"/><rect x="1302.0" y="771" width="3.2" height="4" fill="#626262"/><rect x="1302.0" y="775" width="3.2" height="8" fill="#6a6a6a"/><rect x="1302.0" y="783" width="3.2" height="14" fill="#6e6e6e"/><rect x="1302.0" y="797" width="3.2" height="12" fill="#747474"/><rect x="1302.0" y="809" width="3.2" height="8" fill="#747474"/><rect x="1302.0" y="817" width="3.2" height="7" fill="#747474"/><rect x="1302.0" y="824" width="3.2" height="5" fill="#747474"/><rect x="1302.0" y="829" width="3.2" height="16" fill="#626262"/><rect x="1302.0" y="845" width="3.2" height="12" fill="#6e6e6e"/><rect x="1302.0" y="857" width="3.2" height="10" fill="#747474"/><rect x="1302.0" y="867" width="3.2" height="16" fill="#6e6e6e"/><rect x="1302.0" y="883" width="3.2" height="6" fill="#6e6e6e"/><rect x="1302.0" y="889" width="3.2" height="7" fill="#747474"/><rect x="1302.0" y="896" width="3.2" height="16" fill="#666666"/><rect x="1302.0" y="912" width="3.2" height="10" fill="#6a6a6a"/><rect x="1302.0" y="926" width="3.2" height="4" fill="#666666"/><rect x="1302.0" y="930" width="3.2" height="8" fill="#6a6a6a"/><rect x="1302.0" y="938" width="3.2" height="8" fill="#747474"/><rect x="1302.0" y="946" width="3.2" height="15" fill="#747474"/><rect x="1302.0" y="961" width="3.2" height="12" fill="#747474"/><rect x="1302.0" y="973" width="3.2" height="9" fill="#6e6e6e"/><rect x="1302.0" y="994" width="3.2" height="15" fill="#666666"/><rect x="1302.0" y="1009" width="3.2" height="8" fill="#626262"/><rect x="1302.0" y="1017" width="3.2" height="7" fill="#666666"/><rect x="1302.0" y="1024" width="3.2" height="5" fill="#626262"/><rect x="1302.0" y="1029" width="3.2" height="3" fill="#666666"/>
<rect x="1478.500" y="578" width="4" height="454" fill="#444444"/>
<rect x="1479.1" y="578" width="2.8" height="7" fill="#545454"/><rect x="1479.1" y="585" width="2.8" height="5" fill="#545454"/><rect x="1479.1" y="590" width="2.8" height="4" fill="#646464"/><rect x="1479.1" y="594" width="2.8" height="3" fill="#5a5a5a"/><rect x="1479.1" y="604" width="2.8" height="6" fill="#5e5e5e"/><rect x="1479.1" y="610" width="2.8" height="5" fill="#646464"/><rect x="1479.1" y="615" width="2.8" height="7" fill="#5e5e5e"/><rect x="1479.1" y="622" width="2.8" height="6" fill="#545454"/><rect x="1479.1" y="628" width="2.8" height="2" fill="#545454"/><rect x="1479.1" y="630" width="2.8" height="6" fill="#646464"/><rect x="1479.1" y="636" width="2.8" height="6" fill="#5e5e5e"/><rect x="1479.1" y="642" width="2.8" height="6" fill="#5a5a5a"/><rect x="1479.1" y="648" width="2.8" height="7" fill="#545454"/><rect x="1479.1" y="655" width="2.8" height="5" fill="#5e5e5e"/><rect x="1479.1" y="665" width="2.8" height="7" fill="#646464"/><rect x="1479.1" y="672" width="2.8" height="3" fill="#5a5a5a"/><rect x="1479.1" y="675" width="2.8" height="6" fill="#545454"/><rect x="1479.1" y="681" width="2.8" height="7" fill="#545454"/><rect x="1479.1" y="688" width="2.8" height="5" fill="#545454"/><rect x="1479.1" y="693" width="2.8" height="2" fill="#646464"/><rect x="1479.1" y="695" width="2.8" height="7" fill="#5e5e5e"/><rect x="1479.1" y="702" width="2.8" height="7" fill="#646464"/><rect x="1479.1" y="709" width="2.8" height="6" fill="#646464"/><rect x="1479.1" y="715" width="2.8" height="2" fill="#5a5a5a"/><rect x="1479.1" y="717" width="2.8" height="2" fill="#545454"/><rect x="1479.1" y="719" width="2.8" height="6" fill="#5a5a5a"/><rect x="1479.1" y="725" width="2.8" height="3" fill="#5a5a5a"/><rect x="1479.1" y="728" width="2.8" height="5" fill="#5e5e5e"/><rect x="1479.1" y="733" width="2.8" height="5" fill="#5e5e5e"/><rect x="1479.1" y="738" width="2.8" height="7" fill="#5e5e5e"/><rect x="1479.1" y="745" width="2.8" height="7" fill="#646464"/><rect x="1479.1" y="758" width="2.8" height="6" fill="#545454"/><rect x="1479.1" y="764" width="2.8" height="4" fill="#545454"/><rect x="1479.1" y="768" width="2.8" height="5" fill="#5e5e5e"/><rect x="1479.1" y="773" width="2.8" height="2" fill="#5e5e5e"/><rect x="1479.1" y="775" width="2.8" height="3" fill="#646464"/><rect x="1479.1" y="778" width="2.8" height="5" fill="#5e5e5e"/><rect x="1479.1" y="789" width="2.8" height="7" fill="#646464"/><rect x="1479.1" y="796" width="2.8" height="6" fill="#5e5e5e"/><rect x="1479.1" y="802" width="2.8" height="3" fill="#545454"/><rect x="1479.1" y="805" width="2.8" height="6" fill="#646464"/><rect x="1479.1" y="811" width="2.8" height="4" fill="#545454"/><rect x="1479.1" y="815" width="2.8" height="4" fill="#646464"/><rect x="1479.1" y="819" width="2.8" height="2" fill="#646464"/><rect x="1479.1" y="821" width="2.8" height="6" fill="#5a5a5a"/><rect x="1479.1" y="832" width="2.8" height="2" fill="#5e5e5e"/><rect x="1479.1" y="834" width="2.8" height="6" fill="#5a5a5a"/><rect x="1479.1" y="846" width="2.8" height="5" fill="#5e5e5e"/><rect x="1479.1" y="858" width="2.8" height="5" fill="#5a5a5a"/><rect x="1479.1" y="863" width="2.8" height="4" fill="#5a5a5a"/><rect x="1479.1" y="867" width="2.8" height="3" fill="#646464"/><rect x="1479.1" y="872" width="2.8" height="4" fill="#5e5e5e"/><rect x="1479.1" y="878" width="2.8" height="4" fill="#5a5a5a"/><rect x="1479.1" y="882" width="2.8" height="4" fill="#545454"/><rect x="1479.1" y="886" width="2.8" height="5" fill="#5a5a5a"/><rect x="1479.1" y="891" width="2.8" height="2" fill="#5e5e5e"/><rect x="1479.1" y="897" width="2.8" height="5" fill="#646464"/><rect x="1479.1" y="902" width="2.8" height="2" fill="#646464"/><rect x="1479.1" y="904" width="2.8" height="2" fill="#545454"/><rect x="1479.1" y="906" width="2.8" height="3" fill="#5e5e5e"/><rect x="1479.1" y="915" width="2.8" height="3" fill="#5e5e5e"/><rect x="1479.1" y="918" width="2.8" height="5" fill="#545454"/><rect x="1479.1" y="923" width="2.8" height="2" fill="#646464"/><rect x="1479.1" y="925" width="2.8" height="2" fill="#5e5e5e"/><rect x="1479.1" y="927" width="2.8" height="5" fill="#646464"/><rect x="1479.1" y="932" width="2.8" height="4" fill="#5e5e5e"/><rect x="1479.1" y="936" width="2.8" height="5" fill="#5e5e5e"/><rect x="1479.1" y="941" width="2.8" height="4" fill="#545454"/><rect x="1479.1" y="945" width="2.8" height="4" fill="#5e5e5e"/><rect x="1479.1" y="949" width="2.8" height="4" fill="#5e5e5e"/><rect x="1479.1" y="953" width="2.8" height="6" fill="#646464"/><rect x="1479.1" y="959" width="2.8" height="5" fill="#5a5a5a"/><rect x="1479.1" y="964" width="2.8" height="2" fill="#646464"/><rect x="1479.1" y="966" width="2.8" height="7" fill="#5a5a5a"/><rect x="1479.1" y="973" width="2.8" height="6" fill="#5e5e5e"/><rect x="1479.1" y="979" width="2.8" height="2" fill="#5a5a5a"/><rect x="1479.1" y="981" width="2.8" height="5" fill="#545454"/><rect x="1479.1" y="986" width="2.8" height="6" fill="#5a5a5a"/><rect x="1479.1" y="992" width="2.8" height="6" fill="#5e5e5e"/><rect x="1479.1" y="1005" width="2.8" height="7" fill="#5e5e5e"/><rect x="1479.1" y="1024" width="2.8" height="3" fill="#5e5e5e"/><rect x="1479.1" y="1027" width="2.8" height="5" fill="#5e5e5e"/>
<path d="M842.8 750.3L859.4 750.0" stroke="#585858" stroke-width="1.300"/>
<path d="M859.4 750.0L872.9 749.7" stroke="#8c8c8c" stroke-width="1.500"/>
<path d="M924.5 748.7L936.4 748.4" stroke="#585858" stroke-width="1.300"/>
<path d="M936.4 748.4L946.1 748.3" stroke="#8c8c8c" stroke-width="1.500"/>
<path d="M978.3 747.6L994.9 747.3" stroke="#585858" stroke-width="1.300"/>
<path d="M994.9 747.3L1008.5 747.0" stroke="#8c8c8c" stroke-width="1.500"/>
<path d="M1040.7 746.3L1057.3 746.0" stroke="#585858" stroke-width="1.300"/>
<path d="M1057.3 746.0L1070.8 745.7" stroke="#8c8c8c" stroke-width="1.500"/>
<path d="M1107.4 745.0L1126.4 744.6" stroke="#585858" stroke-width="1.300"/>
<path d="M1126.4 744.6L1141.8 744.3" stroke="#8c8c8c" stroke-width="1.500"/>
<path d="M1167.7 743.8L1187.8 743.3" stroke="#585858" stroke-width="1.300"/>
<path d="M1187.8 743.3L1204.2 743.0" stroke="#8c8c8c" stroke-width="1.500"/>
<path d="M1236.5 742.4L1253.1 742.0" stroke="#585858" stroke-width="1.300"/>
<path d="M1253.1 742.0L1266.6 741.7" stroke="#8c8c8c" stroke-width="1.500"/>
<path d="M1298.9 741.1L1313.1 740.8" stroke="#585858" stroke-width="1.300"/>
<path d="M1313.1 740.8L1324.7 740.6" stroke="#8c8c8c" stroke-width="1.500"/>
<path d="M1374.2 739.6L1388.4 739.3" stroke="#585858" stroke-width="1.300"/>
<path d="M1388.4 739.3L1400.0 739.0" stroke="#8c8c8c" stroke-width="1.500"/>
<path d="M1436.6 738.3L1450.8 738.0" stroke="#585858" stroke-width="1.300"/>
<path d="M1450.8 738.0L1462.4 737.8" stroke="#8c8c8c" stroke-width="1.500"/>
<path d="M1490.4 737.2L1505.8 736.9" stroke="#585858" stroke-width="1.300"/>
<path d="M1505.8 736.9L1518.3 736.6" stroke="#8c8c8c" stroke-width="1.500"/>
<path d="M822.3 750.8L835.1 750.5" stroke="#565656" stroke-width="1.300"/>
<path d="M835.1 750.5L848.0 750.2" stroke="#8a8a8a" stroke-width="1.500"/>
<path d="M763.1 752.0L774.4 751.7" stroke="#565656" stroke-width="1.300"/>
<path d="M774.4 751.7L785.8 751.5" stroke="#8a8a8a" stroke-width="1.500"/>
<path d="M437.9 758.6L453.3 758.3" stroke="#565656" stroke-width="1.300"/>
<path d="M453.3 758.3L468.8 757.9" stroke="#8a8a8a" stroke-width="1.500"/>
<path d="M374.3 759.9L386.6 759.6" stroke="#565656" stroke-width="1.300"/>
<path d="M386.6 759.6L398.8 759.4" stroke="#8a8a8a" stroke-width="1.500"/>
<path d="M317.0 761.0L328.6 760.8" stroke="#565656" stroke-width="1.300"/>
<path d="M328.6 760.8L340.1 760.6" stroke="#8a8a8a" stroke-width="1.500"/>
<path d="M249.3 762.4L264.5 762.1" stroke="#565656" stroke-width="1.300"/>
<path d="M264.5 762.1L279.7 761.8" stroke="#8a8a8a" stroke-width="1.500"/>
<path d="M191.1 763.6L205.8 763.3" stroke="#565656" stroke-width="1.300"/>
<path d="M205.8 763.3L220.5 763.0" stroke="#8a8a8a" stroke-width="1.500"/>
<path d="M126.7 764.9L138.7 764.6" stroke="#565656" stroke-width="1.300"/>
<path d="M138.7 764.6L150.8 764.4" stroke="#8a8a8a" stroke-width="1.500"/>
<rect x="1399.2" y="1011.3" width="2.3" height="1.300" fill="#6e6e6e"/>
<rect x="1397.7" y="1028.2" width="3.3" height="1.300" fill="#6e6e6e"/>
<rect x="1404.3" y="1021.9" width="4.0" height="1.300" fill="#c8c8c8"/>
<rect x="1394.1" y="1017.0" width="3.4" height="1.300" fill="#969696"/>
<rect x="1406.2" y="1023.7" width="3.9" height="1.300" fill="#6e6e6e"/>
<rect x="1410.9" y="1019.5" width="4.2" height="1.300" fill="#c8c8c8"/>
<rect x="1404.2" y="1016.6" width="3.7" height="1.300" fill="#828282"/>
<rect x="1403.8" y="1030.7" width="4.9" height="1.300" fill="#828282"/>
<rect x="1403.8" y="1018.9" width="4.8" height="1.300" fill="#8c8c8c"/>
<rect x="1401.4" y="1030.9" width="4.7" height="1.300" fill="#6e6e6e"/>
<rect x="1405.4" y="1020.3" width="2.1" height="1.300" fill="#969696"/>
<rect x="1398.6" y="1015.7" width="2.1" height="1.300" fill="#8c8c8c"/>
<rect x="1400.3" y="1016.2" width="4.6" height="1.300" fill="#828282"/>
<rect x="1395.8" y="1021.8" width="4.3" height="1.300" fill="#8c8c8c"/>
<rect x="1394.8" y="1026.6" width="4.4" height="1.300" fill="#969696"/>
<rect x="1405.0" y="1013.1" width="4.0" height="1.300" fill="#c8c8c8"/>
<rect x="1411.2" y="1020.4" width="3.1" height="1.300" fill="#828282"/>
<rect x="1401.1" y="1023.6" width="4.7" height="1.300" fill="#6e6e6e"/>
<rect x="1410.8" y="1016.3" width="3.3" height="1.300" fill="#c8c8c8"/>
<rect x="1399.4" y="1024.8" width="3.5" height="1.300" fill="#828282"/>
<rect x="1411.7" y="1018.5" width="4.6" height="1.300" fill="#969696"/>
<rect x="1403.8" y="1029.3" width="4.9" height="1.300" fill="#6e6e6e"/>
<rect x="1409.8" y="1026.2" width="4.3" height="1.300" fill="#8c8c8c"/>
<rect x="1400.9" y="1014.0" width="4.6" height="1.300" fill="#c8c8c8"/>
<rect x="1406.7" y="1013.4" width="4.2" height="1.300" fill="#c8c8c8"/>
<rect x="1396.5" y="1014.2" width="2.1" height="1.300" fill="#c8c8c8"/>
<path d="M1363 788h30" stroke="#545454" stroke-width="1.200" stroke-dasharray="5 3"/>
</g>
<g filter="url(#cm2)">
<rect x="65.1" y="578" width="7" height="454" fill="#bababa"/>
<rect x="66.5" y="578" width="4.200" height="454" fill="#f2f2f2"/>
<rect x="68.0" y="578" width="1.200" height="454" fill="#fdfdfd"/>
<rect x="67.6" y="640" width="2.200" height="28" fill="#ffffff"/>
<rect x="67.6" y="690" width="2.200" height="40" fill="#ffffff"/>
<rect x="67.6" y="878" width="2.200" height="6" fill="#ffffff"/>
<rect x="594.500" y="578" width="8" height="454" fill="#969696" opacity=".8"/><rect x="596.700" y="578" width="3.600" height="454" fill="#acacac"/>
<rect x="597.3" y="578" width="2.4" height="16" fill="#cccccc"/>
<rect x="597.3" y="594" width="2.4" height="23" fill="#d0d0d0"/>
<rect x="597.3" y="617" width="2.4" height="10" fill="#d0d0d0"/>
<rect x="597.3" y="627" width="2.4" height="28" fill="#d0d0d0"/>
<rect x="597.3" y="655" width="2.4" height="24" fill="#c4c4c4"/>
<rect x="597.0" y="679" width="2.9" height="15" fill="#e4e4e4"/>
<rect x="597.3" y="694" width="2.4" height="14" fill="#cccccc"/>
<rect x="597.0" y="708" width="2.9" height="33" fill="#e4e4e4"/>
<rect x="597.0" y="741" width="2.9" height="30" fill="#e4e4e4"/>
<rect x="597.3" y="771" width="2.4" height="25" fill="#cccccc"/>
<rect x="597.0" y="796" width="2.9" height="25" fill="#d8d8d8"/>
<rect x="597.0" y="821" width="2.9" height="17" fill="#e8e8e8"/>
<rect x="597.0" y="838" width="2.9" height="31" fill="#e8e8e8"/>
<rect x="597.0" y="869" width="2.9" height="11" fill="#dcdcdc"/>
<rect x="597.3" y="880" width="2.4" height="26" fill="#cccccc"/>
<rect x="597.0" y="906" width="2.9" height="27" fill="#e4e4e4"/>
<rect x="597.3" y="933" width="2.4" height="19" fill="#cccccc"/>
<rect x="597.0" y="952" width="2.9" height="34" fill="#dcdcdc"/>
<rect x="597.3" y="986" width="2.4" height="28" fill="#d0d0d0"/>
<rect x="597.0" y="1014" width="2.9" height="17" fill="#dedede"/>
<rect x="597.3" y="1031" width="2.4" height="1" fill="#cccccc"/>
</g>
</svg>
<div id="titlebar" class="abs"></div>
<div id="title" class="abs">Gqrx 2.15.8 - rtl=0</div>
<div class="abs wbtn" style="left:1750px"></div><div class="abs wbtn" style="left:1784px"></div><div class="abs wbtn" style="left:1818px"></div>
<svg class="abs" style="left:1750px;top:8px" width="90" height="22" viewBox="0 0 90 22"><path d="M7 13.500h8" stroke="#333" stroke-width="1.300" fill="none"/><rect x="41.600" y="9.600" width="5" height="5" fill="none" stroke="#333" stroke-width="1.200"/><path d="M44 7.500h5v5" fill="none" stroke="#666" stroke-width="1"/><path d="M75.200 7.200l7.600 7.600M82.800 7.200l-7.600 7.600" stroke="#333" stroke-width="1.300" fill="none"/></svg>
<div id="menubar" class="abs"></div>
<div class="abs menu" style="left:11px;letter-spacing:0.1px">File<i style="width:9px"></i></div>
<div class="abs menu" style="left:50px;letter-spacing:0.3px">Tools<i style="width:9px"></i></div>
<div class="abs menu" style="left:101px;letter-spacing:0.05px">View<i style="width:10px"></i></div>
<div class="abs menu" style="left:149px;letter-spacing:0.2px">Help<i style="width:11px"></i></div>
<div id="toolbar" class="abs"></div>
<svg class="abs" style="left:6px;top:68px" width="6" height="24"><rect x="1" y="1" width="1" height="1" fill="#b0b0b0"/><rect x="4" y="1" width="1" height="1" fill="#b0b0b0"/><rect x="1" y="4" width="1" height="1" fill="#b0b0b0"/><rect x="4" y="4" width="1" height="1" fill="#b0b0b0"/><rect x="1" y="7" width="1" height="1" fill="#b0b0b0"/><rect x="4" y="7" width="1" height="1" fill="#b0b0b0"/><rect x="1" y="10" width="1" height="1" fill="#b0b0b0"/><rect x="4" y="10" width="1" height="1" fill="#b0b0b0"/><rect x="1" y="13" width="1" height="1" fill="#b0b0b0"/><rect x="4" y="13" width="1" height="1" fill="#b0b0b0"/><rect x="1" y="16" width="1" height="1" fill="#b0b0b0"/><rect x="4" y="16" width="1" height="1" fill="#b0b0b0"/><rect x="1" y="19" width="1" height="1" fill="#b0b0b0"/><rect x="4" y="19" width="1" height="1" fill="#b0b0b0"/><rect x="1" y="22" width="1" height="1" fill="#b0b0b0"/><rect x="4" y="22" width="1" height="1" fill="#b0b0b0"/></svg>
<div id="playbtn" class="abs"></div><svg class="abs" style="left:23px;top:70px" width="16" height="18" viewBox="0 0 16 18"><path d="M2 1.900L13.300 8.800L2 15.700Z" fill="#e9e9e9" stroke="#979797" stroke-width="1.100" stroke-linejoin="round"/></svg>
<div class="abs tsep" style="left:51px"></div>
<div class="abs tsep" style="left:157px"></div>
<div class="abs tsep" style="left:197px"></div>
<div class="abs tsep" style="left:236px"></div>
<div class="abs tsep" style="left:309px"></div>
<div class="abs tsep" style="left:349px"></div>
<svg class="abs ico" style="left:58px" viewBox="0 0 24 24">
<path d="M1 6.5h22v11.5l-1.5 1.5h-19L1 18z" fill="#77961c" stroke="#4c6410" stroke-width="1"/>
<rect x="2" y="7.5" width="20" height="2" fill="#9ab83a" opacity=".7"/>
<g fill="#43433f" stroke="#2b2b28" stroke-width=".6"><rect x="4" y="8.5" width="3" height="6.5" rx=".6"/><rect x="8.5" y="8.5" width="3" height="6.5" rx=".6"/><rect x="13" y="8.5" width="3" height="6.5" rx=".6"/><rect x="17.5" y="8.5" width="3" height="6.5" rx=".6"/></g>
<g fill="#8a8a84"><rect x="4.6" y="9.4" width="1.8" height="2.2"/><rect x="9.1" y="9.4" width="1.8" height="2.2"/><rect x="13.6" y="9.4" width="1.8" height="2.2"/><rect x="18.1" y="9.4" width="1.8" height="2.2"/></g>
<g fill="#e8d52a"><rect x="4" y="17" width="2" height="2"/><rect x="7.5" y="17" width="2" height="2"/><rect x="11" y="17" width="2" height="2"/><rect x="14.5" y="17" width="2" height="2"/></g>
</svg>
<svg class="abs ico" style="left:91px" viewBox="0 0 24 24">
<path d="M2.5 19.5V4.5q0-1 1-1h5.5l2 2.5h9q1 0 1 1V19.500z" fill="#8f9280" stroke="#6d705f" stroke-width="1"/>
<path d="M1.5 20.5l1.2-10.5q.1-1 1.1-1h17.4q1 0 .9 1L21 20.500z" fill="#b3b6a3" stroke="#7a7d6b" stroke-width="1"/>
<path d="M2.7 19.5l1-9.500h17.3" fill="none" stroke="#cfd2c0" stroke-width=".8"/>
</svg>
<svg class="abs ico" style="left:124px" viewBox="0 0 24 24">
<path d="M2.500 3q0-1 1-1h17q1 0 1 1v18q0 1-1 1h-15.500l-2.500-2.500z" fill="#5d8fd0" stroke="#3465a4" stroke-width="1"/>
<rect x="5" y="2.500" width="14" height="10" fill="#fafafa" stroke="#c9c9c9" stroke-width=".5"/>
<rect x="5" y="2.500" width="14" height="2" fill="#ef7a32"/>
<rect x="5" y="6.500" width="14" height=".7" fill="#ddd"/><rect x="5" y="8.500" width="14" height=".7" fill="#ddd"/><rect x="5" y="10.500" width="14" height=".7" fill="#ddd"/>
<rect x="7" y="15" width="11" height="6.500" fill="#c8d0d8" stroke="#6d7f94" stroke-width=".7"/>
<rect x="8.500" y="16.200" width="3" height="4.500" fill="#4d6f9a"/>
</svg>
<svg class="abs ico" style="left:164px" viewBox="0 0 24 24">
<path d="M2.500 3.500h18v19h-18z" fill="#f4f4f2" stroke="#b9b9b4" stroke-width="1"/>
<rect x="9" y="10" width="9.500" height="9" fill="#dadad7"/>
<path d="M2 22.500h19v1h-19z" fill="#a3a39f"/>
<path d="M6.500 1.500h8v13l-4-3.400-4 3.400z" fill="#5f84b4" stroke="#3b5f90" stroke-width=".8"/>
<path d="M7.500 2.300h2.500v9.600l-2.500 2.100z" fill="#86a5cc" opacity=".7"/>
<circle cx="20" cy="4.800" r="2.700" fill="#fff27a" stroke="#f3e24a" stroke-width="1.400"/>
</svg>
<svg class="abs ico" style="left:204px" viewBox="0 0 24 24">
<rect x="1.500" y="2.500" width="21" height="18" rx="2.500" fill="#d6d6d2" stroke="#9a9a96" stroke-width="1"/>
<rect x="3.500" y="4.500" width="17" height="12" fill="#1f62b0" stroke="#0f3f80" stroke-width=".8"/>
<rect x="4" y="5" width="16" height="5" fill="#3d82cf" opacity=".55"/>
<path d="M4 11h4l1.200-2 1.500 5 1.600-7.500 1.500 5.500 1-1.500H20" fill="none" stroke="#c8f7ff" stroke-width="1.300" stroke-linejoin="round"/>
<rect x="7" y="21" width="10" height="1.300" fill="#a8a8a4"/>
<g fill="#8d8d8a"><circle cx="15" cy="18.600" r=".6"/><circle cx="17" cy="18.600" r=".6"/><circle cx="19" cy="18.600" r=".6"/></g>
</svg>
<svg class="abs ico" style="left:243px" viewBox="0 0 24 24">
<rect x="9.500" y="1.500" width="12" height="10" rx="1" fill="#d0d0cc" stroke="#77777a" stroke-width="1"/>
<rect x="11" y="3" width="9" height="6.500" fill="#3b3474"/>
<path d="M11 3h9l-9 5z" fill="#6c66a8" opacity=".7"/>
<path d="M12 12h7l1 2.500h-9z" fill="#b8b8b4" stroke="#77777a" stroke-width=".6"/>
<path d="M17 14.500h5.500l1 2h-7z" fill="#c8c8c4" stroke="#8a8a88" stroke-width=".5"/>
<rect x="1.500" y="7.500" width="13" height="10.500" rx="1" fill="#d6d6d2" stroke="#6e6e72" stroke-width="1"/>
<rect x="3" y="9" width="10" height="7" fill="#3b3474"/>
<path d="M3 9h10l-10 5.500z" fill="#6f69ad" opacity=".75"/>
<path d="M4.500 18.500h7l.8 1.800h-8.600z" fill="#aaa" stroke="#77777a" stroke-width=".5"/>
<path d="M1.500 20.800h13.500l1 2.200h-15.500z" fill="#cdcdc9" stroke="#77777a" stroke-width=".7"/>
</svg>
<svg class="abs ico" style="left:276px" viewBox="0 0 24 24">
<path d="M19.500 2.500l2 2-9 9.500-1.800-1.800z" fill="#d9d9d6" stroke="#8e8e8a" stroke-width=".9"/>
<path d="M11.500 12.500l-2 2" stroke="#8e8e8a" stroke-width="2.400"/>
<path d="M9.800 12.600l1.800 1.800-6 7q-1.300 1.300-2.600 0t0-2.600z" fill="#3f7fd0" stroke="#1f57a4" stroke-width=".9"/>
<path d="M3.200 6.500q-1.400-2.300.2-4.300l2.300 2.300 1.900-.4.400-1.900-2.200-2q3-.9 4.700 1.400 1 1.700.3 3.400l10.400 11q1.400 1.600.1 2.900t-2.900-.1l-10.500-11q-2.700.8-4.700-1.300z" fill="#dcdcd9" stroke="#8e8e8a" stroke-width=".9" transform="translate(.5 2.500) scale(.92)"/>
</svg>
<svg class="abs ico" style="left:317px" viewBox="0 0 24 24">
<g fill="#4583d3" stroke="#3570c0" stroke-width=".5" stroke-linejoin="round"><path d="M12 2l2.800 3.400h-5.600z"/><path d="M12 22.200l2.800-3.400h-5.600z"/><path d="M1.800 12.100l3.400-2.800v5.600z"/><path d="M23.600 12.100l-3.400-2.800v5.600z" transform="translate(-1.400 0)"/></g>
<rect x="6.500" y="8" width="11.500" height="8.500" rx=".8" fill="#f2f2f4" stroke="#9c9ca6" stroke-width="1"/>
<rect x="7" y="8.500" width="10.500" height="2" fill="#6a9ae0"/>
</svg>
<div id="dock" class="abs"></div>
<div class="abs" style="left:1524px;top:99px;height:20px;line-height:20px;font-size:15px;letter-spacing:.05px;white-space:nowrap">Receiver Options</div>
<svg class="abs" style="left:1819px;top:102px" width="28" height="13" viewBox="0 0 28 13"><rect x="1.500" y="1.500" width="10" height="10" rx="2" fill="none" stroke="#6a6868" stroke-width="1"/><rect x="5.500" y="3.500" width="4" height="4" rx="1" fill="none" stroke="#6a6868" stroke-width="1"/><rect x="3.500" y="5.500" width="4" height="4" rx="1" fill="#efefef" stroke="#6a6868" stroke-width="1"/><rect x="15.500" y="1.500" width="10" height="10" rx="2" fill="none" stroke="#6a6868" stroke-width="1"/><path d="M17.700 3.700l5.600 5.600M23.300 3.700l-5.600 5.600" stroke="#5c5a5a" stroke-width="1.900"/></svg>
<div class="abs" style="left:1529px;top:127px;width:309px;height:32px;background:#1f1d1d"></div>
<svg class="abs" style="left:1529px;top:127px" width="309" height="32" viewBox="1529 127 309 32" font-family="Liberation Sans, sans-serif"><g fill="#fff" font-size="26.500px"><text y="153.100" x="1534.4 1544 1575.5 1612.8 1641.2 1662.2 1698.3 1735.4">-200.400</text></g><text x="1782.700" y="150.500" font-size="19px" fill="#a0a0a0">kHz</text></svg>
<div class="abs" style="left:1529px;top:164px;height:20px;line-height:20px;white-space:nowrap;font-size:15px;letter-spacing:.3px">Hardware freq:</div>
<div class="abs" style="left:1637px;top:164px;width:200px;text-align:right;height:20px;line-height:20px;white-space:nowrap;font-size:15px;letter-spacing:-.12px">134.595400 MHz</div>
<div class="abs lbl" style="left:1500px;top:200px;width:122.05px;font-size:15px;letter-spacing:0.05px">Frequency</div>
<div class="abs lbl" style="left:1500px;top:230px;width:122.65px;font-size:15px;letter-spacing:0.65px">Filter width</div>
<div class="abs lbl" style="left:1500px;top:260px;width:122.20px;font-size:15px;letter-spacing:0.2px">Filter shape</div>
<div class="abs lbl" style="left:1500px;top:290px;width:122.80px;font-size:15px;letter-spacing:0.8px">Mode</div>
<div class="abs lbl" style="left:1500px;top:320px;width:121.30px;font-size:15px;letter-spacing:-0.7px">AGC</div>
<div class="abs lbl" style="left:1500px;top:350.5px;width:122.00px;font-size:15px;letter-spacing:0px">Squelch</div>
<div class="abs lbl" style="left:1500px;top:381px;width:122.13px;font-size:15px;letter-spacing:0.13px">Noise blanker</div>
<div class="abs ctl spin" style="left:1627px;top:199px;width:151px;height:24px"></div>
<div class="abs" style="left:1763px;top:200px;width:14px;height:22px;border-left:1px solid #c4c4c4;background:linear-gradient(#fdfdfd,#f0f0f0);border-radius:0 3px 3px 0"></div>
<svg class="abs" style="left:1763px;top:200px" width="14" height="23" viewBox="0 0 14 23"><path d="M2.800 8.400l4.200-3.700 4.200 3.700z" fill="#5a5a5a"/><path d="M2.800 14l4.200 3.800 4.200-3.800z" fill="#5a5a5a"/></svg>
<div class="abs" style="left:1628px;top:200px;width:129px;height:24px;line-height:24px;text-align:right;font-size:15px;letter-spacing:.1px">9395.000</div>
<div class="abs" style="left:1783px;top:200px;height:24px;line-height:24px;font-size:15px">kHz</div>
<div class="abs ctl" style="left:1627px;top:229px;width:151px;padding-left:4.5px;font-size:15px;letter-spacing:-0.25px">User (18.8 k)</div>
<div class="abs arrow" style="left:1762px;top:239.5px"></div>
<div class="abs ctl" style="left:1627px;top:259px;width:151px;padding-left:4.5px;font-size:15px;letter-spacing:0.4px">Normal</div>
<div class="abs arrow" style="left:1762px;top:269.5px"></div>
<div class="abs ctl" style="left:1627px;top:289px;width:151px;padding-left:4.5px;font-size:15px;letter-spacing:0px">AM</div>
<div class="abs arrow" style="left:1762px;top:299.5px"></div>
<div class="abs ctl" style="left:1627px;top:319px;width:151px;padding-left:3.5px;font-size:15px;letter-spacing:0.5px">Medium</div>
<div class="abs arrow" style="left:1762px;top:329.5px"></div>
<div class="abs ctl btn" style="left:1783px;top:289px;width:55px">...</div>
<div class="abs ctl btn" style="left:1783px;top:319px;width:55px">...</div>
<div class="abs ctl spin" style="left:1627px;top:349.500px;width:91px;height:24.500px"></div>
<div class="abs" style="left:1703px;top:350.500px;width:14px;height:22.500px;border-left:1px solid #c4c4c4;background:linear-gradient(#fdfdfd,#f0f0f0);border-radius:0 3px 3px 0"></div>
<svg class="abs" style="left:1703px;top:350.5px" width="14" height="23" viewBox="0 0 14 23"><path d="M2.800 8.400l4.200-3.700 4.200 3.700z" fill="#5a5a5a"/><path d="M2.800 14l4.200 3.800 4.200-3.800z" fill="#a8a8a8"/></svg>
<div class="abs" style="left:1632px;top:350px;height:24px;line-height:24px;font-size:15px;white-space:nowrap">-150.0 dB</div>
<div class="abs ctl btn" style="left:1723px;top:349.500px;width:55px;font-size:15px">A</div>
<div class="abs ctl btn" style="left:1783px;top:349.500px;width:55px;font-size:15px">R</div>
<div class="abs ctl btn" style="left:1627px;top:380px;width:73px;font-size:15px">NB1</div>
<div class="abs ctl btn" style="left:1705px;top:380px;width:73px;font-size:15px">NB2</div>
<div class="abs ctl btn" style="left:1783px;top:380px;width:55px">...</div>
<div class="abs tab" style="left:1520px;width:107px;font-size:15px;letter-spacing:.25px">Input con…</div>
<div class="abs tab" style="left:1752px;width:95px;font-size:15px;letter-spacing:-.2px">FFT Set…</div>
<div class="abs tab sel" style="left:1626px;width:127px;font-size:15px">Receiver Op…</div>
<div id="edgeL" class="abs"></div><div id="edgeR" class="abs"></div><div id="edgeB" class="abs"></div>
</div></body></html>
